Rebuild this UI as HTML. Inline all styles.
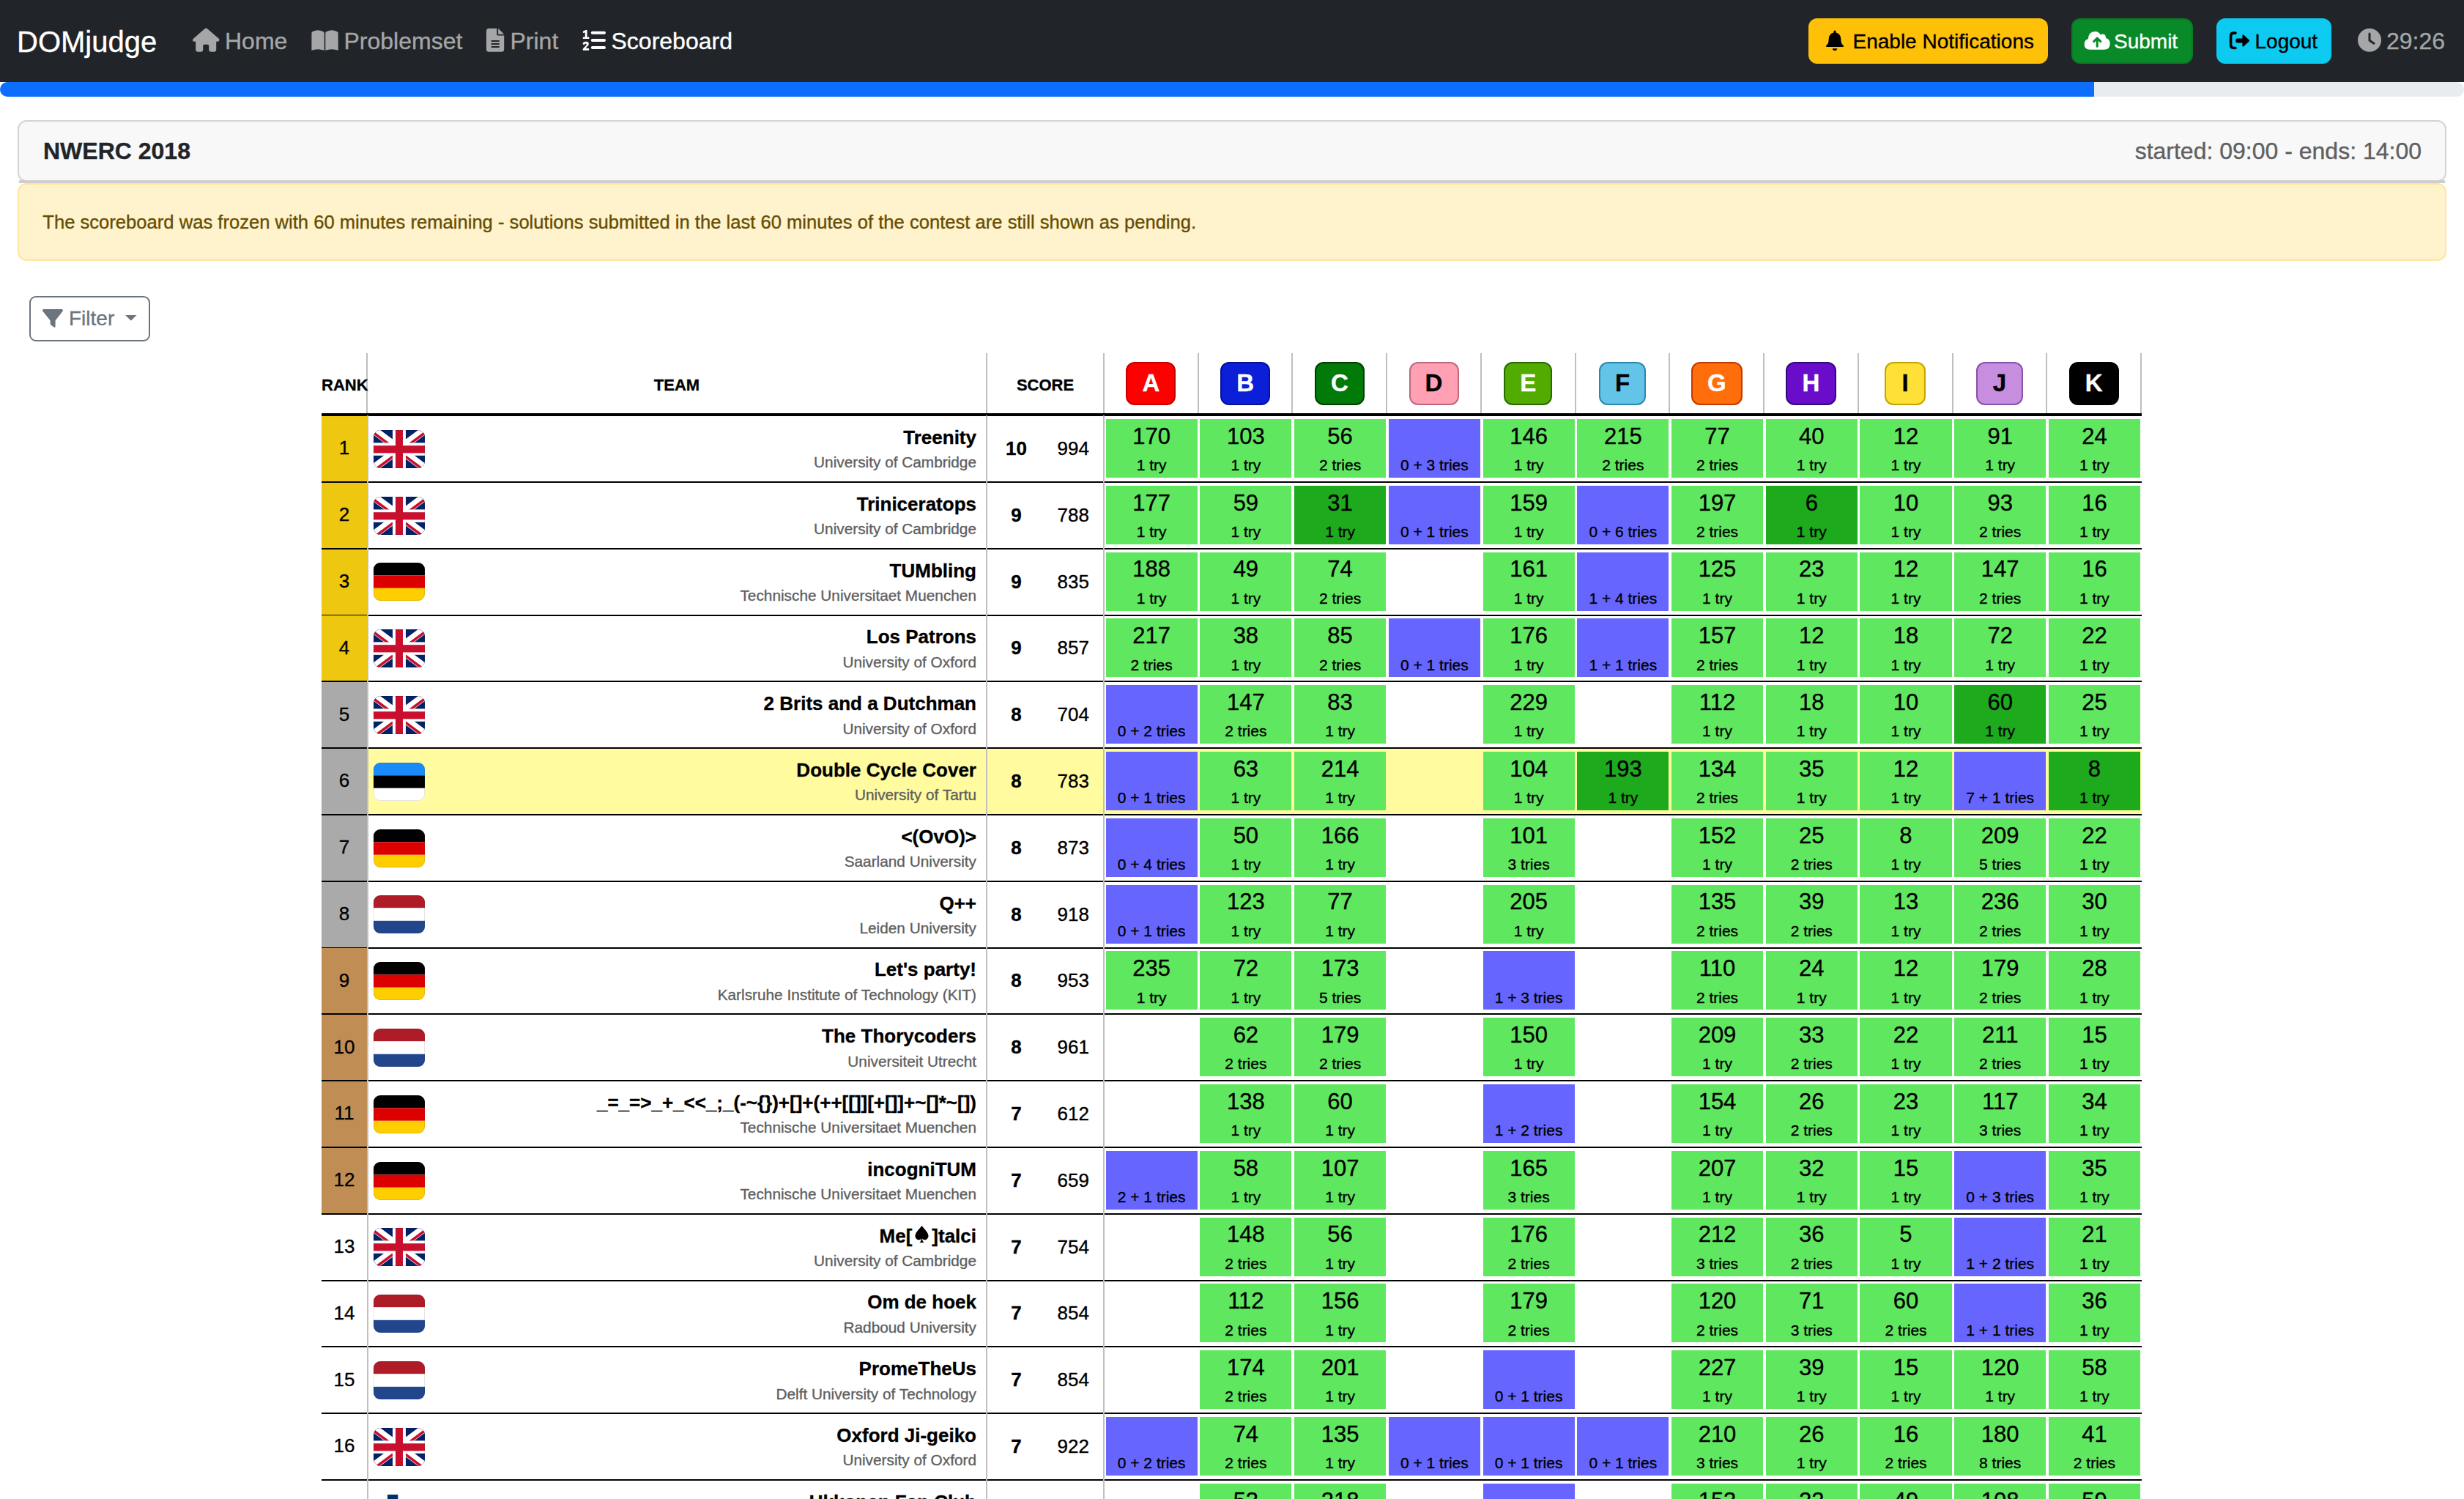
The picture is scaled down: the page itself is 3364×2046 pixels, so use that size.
<!DOCTYPE html>
<html><head><meta charset="utf-8"><title>Scoreboard</title>
<style>
html,body{margin:0;padding:0;background:#fff;}
body{width:3364px;height:2046px;position:relative;overflow:hidden;font-family:"Liberation Sans",sans-serif;}
.t{position:absolute;white-space:nowrap;-webkit-text-stroke:0.35px currentColor;}
.b{position:absolute;box-sizing:border-box;}
</style></head><body>

<div class="b" style="left:0.00px;top:0.00px;width:3364.00px;height:112.00px;background:#212529"></div>
<div class="t" style="left:23.00px;top:36.64px;font-size:40px;line-height:40px;color:#fff;font-weight:400;">DOMjudge</div>
<svg class="b" style="left:262.00px;top:37.00px;" width="40" height="36" viewBox="262 37 40 36"><path fill="#a5a6a8" d="M281.3 38.5 Q282 38.3 282.8 39 L298.6 52.6 Q300.4 54.4 299 56 Q298.4 56.8 296.6 56.8 L295.2 56.8 L295.2 67.6 Q295.2 70.8 292 70.8 L288.4 70.8 Q285.2 70.8 285.2 67.6 L285.2 62.6 Q285.2 60.8 283.4 60.8 L279 60.8 Q277.2 60.8 277.2 62.6 L277.2 67.6 Q277.2 70.8 274 70.8 L270.4 70.8 Q267.2 70.8 267.2 67.6 L267.2 56.8 L265.6 56.8 Q263.8 56.8 263.3 56 Q262.4 54.4 264 52.8 L279.8 39 Q280.6 38.3 281.3 38.5 Z"/></svg>
<div class="t" style="left:307.00px;top:40.21px;font-size:32px;line-height:32px;color:#a5a6a8;font-weight:400;">Home</div>
<svg class="b" style="left:424.00px;top:38.00px;" width="40" height="33" viewBox="424 38 40 33"><path fill="#a5a6a8" d="M425.4 45 Q425.4 43.4 427 43.1 Q434 39.4 441 43.1 Q442.7 43.4 442.7 45 L442.7 68.8 Q434 65.8 425.4 68.8 Z M444.3 45 Q444.3 43.4 446 43.1 Q453 39.4 460 43.1 Q461.7 43.4 461.7 45 L461.7 68.8 Q453 65.8 444.3 68.8 Z"/></svg>
<div class="t" style="left:469.50px;top:40.21px;font-size:32px;line-height:32px;color:#a5a6a8;font-weight:400;">Problemset</div>
<svg class="b" style="left:663.00px;top:38.00px;" width="27" height="34" viewBox="663 38 27 34"><path fill="#a5a6a8" fill-rule="evenodd" d="M667.6 38.8 L678.3 38.8 L678.3 47 Q678.3 48.6 679.9 48.6 L688.2 48.6 L688.2 67.2 Q688.2 70.8 684.6 70.8 L667.6 70.8 Q664 70.8 664 67.2 L664 42.4 Q664 38.8 667.6 38.8 Z M670.7 55.1 L681.8 55.1 L681.8 56.9 L670.7 56.9 Z M670.7 59.1 L681.8 59.1 L681.8 60.9 L670.7 60.9 Z M670.7 63.1 L681.8 63.1 L681.8 64.9 L670.7 64.9 Z"/><path fill="#a5a6a8" d="M680.2 38.8 L688.2 46.8 L680.2 46.8 Z"/></svg>
<div class="t" style="left:696.50px;top:40.21px;font-size:32px;line-height:32px;color:#a5a6a8;font-weight:400;">Print</div>
<svg class="b" style="left:794.00px;top:40.00px;" width="36" height="31" viewBox="794 40 36 31"><g fill="#fff"><path d="M796.2 42.6 L799.6 41 L801.6 41 L801.6 50.6 L803.8 50.6 Q804.4 50.6 804.4 51.6 L804.4 52.2 Q804.4 53.1 803.6 53.1 L796.6 53.1 Q795.8 53.1 795.8 52.2 L795.8 51.6 Q795.8 50.6 796.6 50.6 L798.8 50.6 L798.8 44.2 L797.2 44.9 Q796 45.2 795.8 44.2 Q795.6 43.1 796.2 42.6 Z"/><path d="M795.6 59.6 Q796.4 56.8 800 56.8 Q803.8 56.8 803.8 60 Q803.8 62 801.6 63.6 L799.6 65.9 L803.4 65.9 Q804.3 65.9 804.3 66.8 L804.3 67.6 Q804.3 68.8 803.4 68.8 L796.4 68.8 Q795.4 68.8 795.6 67.6 Q795.8 66.4 797.2 65 L800 62.2 Q801 61.2 800.8 60.2 Q800.4 59.4 799.6 59.4 Q798.6 59.4 798.2 60.4 Q797.6 61.2 796.4 60.8 Q795.4 60.4 795.6 59.6 Z"/><rect x="806.8" y="42.8" width="20.2" height="4" rx="2"/><rect x="806.8" y="53" width="20.2" height="4" rx="2"/><rect x="806.8" y="63" width="20.2" height="4" rx="2"/></g></svg>
<div class="t" style="left:834.50px;top:40.21px;font-size:32px;line-height:32px;color:#fff;font-weight:400;">Scoreboard</div>
<div class="b" style="left:2469.00px;top:25.00px;width:327.00px;height:62.00px;background:#ffc107;border:2px solid #ffc107;border-radius:12px"></div>
<svg class="b" style="left:2490.00px;top:40.00px;" width="30" height="31" viewBox="2490 40 30 31"><path fill="#000" d="M2505 41.6 Q2506.6 41.6 2506.6 43.4 L2506.6 44.6 Q2512.6 46 2513.2 52.6 L2513.6 57 Q2514 59.6 2516.6 62 Q2517.6 63 2517 63.6 Q2516.6 63.9 2515.8 63.9 L2494.2 63.9 Q2493.4 63.9 2493 63.6 Q2492.4 63 2493.4 62 Q2496 59.6 2496.4 57 L2496.8 52.6 Q2497.4 46 2503.4 44.6 L2503.4 43.4 Q2503.4 41.6 2505 41.6 Z M2501.7 66.2 L2508.3 66.2 Q2508 69 2505 69 Q2502 69 2501.7 66.2 Z"/></svg>
<div class="t" style="left:2529.50px;top:42.80px;font-size:28px;line-height:28px;color:#000;font-weight:400;">Enable Notifications</div>
<div class="b" style="left:2828.00px;top:25.00px;width:166.00px;height:62.00px;background:#088a28;border:2px solid #0a7a25;border-radius:12px"></div>
<svg class="b" style="left:2844.00px;top:42.00px;" width="38" height="27" viewBox="2844 42 38 27"><path fill="#fff" d="M2853.5 67.8 Q2845.7 67.8 2845.7 60.5 Q2845.7 54.4 2851 53 Q2851.4 43 2860.2 43 Q2865.8 43 2867.6 47.6 Q2869 46.6 2870.5 46.6 Q2875 46.6 2875 51.8 Q2880.7 53.6 2880.7 59.6 Q2880.7 67.8 2872.5 67.8 Z"/><path fill="none" stroke="#088a28" stroke-width="3" stroke-linecap="round" stroke-linejoin="round" d="M2863.2 63.2 L2863.2 52.4 M2858.6 56.6 L2863.2 52 L2867.8 56.6"/></svg>
<div class="t" style="left:2886.00px;top:42.80px;font-size:28px;line-height:28px;color:#fff;font-weight:400;">Submit</div>
<div class="b" style="left:3026.00px;top:25.00px;width:157.00px;height:62.00px;background:#0dcaf0;border:2px solid #0dcaf0;border-radius:12px"></div>
<svg class="b" style="left:3042.00px;top:42.00px;" width="32" height="27" viewBox="3042 42 32 27"><path fill="none" stroke="#000" stroke-width="3.6" stroke-linecap="round" d="M3052 45.1 L3049.5 45.1 Q3045.6 45.1 3045.6 49 L3045.6 61.6 Q3045.6 65.5 3049.5 65.5 L3052 65.5"/><path fill="#000" d="M3054.4 52.4 L3061.4 52.4 L3061.4 48.4 Q3061.6 46.6 3063 47.6 L3070.6 54.4 Q3071.6 55.5 3070.6 56.5 L3063 63.4 Q3061.6 64.4 3061.4 62.6 L3061.4 58.6 L3054.4 58.6 Q3052.3 58.6 3052.3 56.6 L3052.3 54.4 Q3052.3 52.4 3054.4 52.4 Z"/></svg>
<div class="t" style="left:3078.50px;top:42.80px;font-size:28px;line-height:28px;color:#000;font-weight:400;">Logout</div>
<svg class="b" style="left:3218.00px;top:38.00px;" width="34" height="34" viewBox="3218 38 34 34"><circle cx="3235" cy="54.8" r="16" fill="#a5a6a8"/><path fill="none" stroke="#212529" stroke-width="3" stroke-linecap="round" stroke-linejoin="round" d="M3235 46 L3235 55.2 L3241 59.2"/></svg>
<div class="t" style="left:3258.00px;top:40.21px;font-size:32px;line-height:32px;color:#a5a6a8;font-weight:400;">29:26</div>
<div class="b" style="left:0.00px;top:112.00px;width:3364.00px;height:20.00px;background:#e9ecef;border-radius:10px;overflow:hidden"></div>
<div class="b" style="left:0;top:112px;width:2859px;height:20px;background:#0d6efd;border-radius:10px 0 0 10px"></div>
<div class="b" style="left:24.00px;top:164.00px;width:3316.00px;height:84.00px;background:#f8f8f8;border:2px solid #d4d4d4;border-radius:12px"></div>
<div class="b" style="left:26.00px;top:246.00px;width:3312.00px;height:4.00px;background:#cecece"></div>
<div class="t" style="left:59.00px;top:189.91px;font-size:32px;line-height:32px;color:#212529;font-weight:700;">NWERC 2018</div>
<div class="t" style="right:58.00px;top:189.91px;font-size:32px;line-height:32px;color:#606060;font-weight:400;text-align:right;">started: 09:00 - ends: 14:00</div>
<div class="b" style="left:24.00px;top:250.00px;width:3316.00px;height:106.00px;background:#fff3cd;border:2px solid #ffe69c;border-radius:12px"></div>
<div class="t" style="left:58.30px;top:290.83px;font-size:25.6px;line-height:25.6px;color:#664d03;font-weight:400;">The scoreboard was frozen with 60 minutes remaining - solutions submitted in the last 60 minutes of the contest are still shown as pending.</div>
<div class="b" style="left:40.00px;top:404.00px;width:165.00px;height:61.50px;border:2px solid #6c757d;border-radius:9px;background:#fff"></div>
<svg class="b" style="left:56.00px;top:420.00px;" width="32" height="30" viewBox="56 420 32 30"><path fill="#6c757d" d="M59.6 422 L84.4 422 Q86.6 422.4 85.6 424.8 L75.6 437.6 L75.6 445.6 Q75.6 447.8 73.6 446.6 L69.4 443.4 Q68.6 442.6 68.6 441.4 L68.6 437.6 L58.4 424.8 Q57.4 422.4 59.6 422 Z"/></svg>
<div class="t" style="left:94.00px;top:421.30px;font-size:28px;line-height:28px;color:#6c757d;font-weight:400;">Filter</div>
<svg class="b" style="left:168.00px;top:428.00px;" width="22" height="12" viewBox="168 428 22 12"><path fill="#6c757d" d="M171 430 L186.6 430 L178.8 437.8 Z"/></svg>
<div class="b" style="left:500.00px;top:482.00px;width:2.00px;height:82.00px;background:#bfbfbf"></div>
<div class="b" style="left:1346.00px;top:482.00px;width:2.00px;height:82.00px;background:#bfbfbf"></div>
<div class="b" style="left:1506.00px;top:482.00px;width:2.00px;height:82.00px;background:#bfbfbf"></div>
<div class="b" style="left:1635.00px;top:482.00px;width:2.00px;height:82.00px;background:#bfbfbf"></div>
<div class="b" style="left:1763.00px;top:482.00px;width:2.00px;height:82.00px;background:#bfbfbf"></div>
<div class="b" style="left:1892.00px;top:482.00px;width:2.00px;height:82.00px;background:#bfbfbf"></div>
<div class="b" style="left:2021.00px;top:482.00px;width:2.00px;height:82.00px;background:#bfbfbf"></div>
<div class="b" style="left:2150.00px;top:482.00px;width:2.00px;height:82.00px;background:#bfbfbf"></div>
<div class="b" style="left:2278.00px;top:482.00px;width:2.00px;height:82.00px;background:#bfbfbf"></div>
<div class="b" style="left:2407.00px;top:482.00px;width:2.00px;height:82.00px;background:#bfbfbf"></div>
<div class="b" style="left:2536.00px;top:482.00px;width:2.00px;height:82.00px;background:#bfbfbf"></div>
<div class="b" style="left:2665.00px;top:482.00px;width:2.00px;height:82.00px;background:#bfbfbf"></div>
<div class="b" style="left:2793.00px;top:482.00px;width:2.00px;height:82.00px;background:#bfbfbf"></div>
<div class="b" style="left:2922.00px;top:482.00px;width:2.00px;height:82.00px;background:#bfbfbf"></div>
<div class="b" style="left:439.00px;top:564.00px;width:2485.00px;height:4.00px;background:#000"></div>
<div class="t" style="left:439.00px;top:515.38px;font-size:22px;line-height:22px;color:#000;font-weight:700;">RANK</div>
<div class="t" style="left:324.00px;width:1200px;top:515.38px;font-size:22px;line-height:22px;color:#000;font-weight:700;text-align:center;">TEAM</div>
<div class="t" style="left:827.00px;width:1200px;top:515.38px;font-size:22px;line-height:22px;color:#000;font-weight:700;text-align:center;">SCORE</div>
<div class="b" style="left:1537.36px;top:494.00px;width:68.00px;height:58.50px;background:#ff0000;border:2px solid #c40000;border-radius:12px"></div>
<div class="t" style="left:971.36px;width:1200px;top:506.07px;font-size:33px;line-height:33px;color:#fff;font-weight:700;text-align:center;">A</div>
<div class="b" style="left:1666.09px;top:494.00px;width:68.00px;height:58.50px;background:#0b1fd9;border:2px solid #05109a;border-radius:12px"></div>
<div class="t" style="left:1100.09px;width:1200px;top:506.07px;font-size:33px;line-height:33px;color:#fff;font-weight:700;text-align:center;">B</div>
<div class="b" style="left:1794.82px;top:494.00px;width:68.00px;height:58.50px;background:#007a08;border:2px solid #003d00;border-radius:12px"></div>
<div class="t" style="left:1228.82px;width:1200px;top:506.07px;font-size:33px;line-height:33px;color:#fff;font-weight:700;text-align:center;">C</div>
<div class="b" style="left:1923.54px;top:494.00px;width:68.00px;height:58.50px;background:#ffa0b4;border:2px solid #c0687a;border-radius:12px"></div>
<div class="t" style="left:1357.54px;width:1200px;top:506.07px;font-size:33px;line-height:33px;color:#000;font-weight:700;text-align:center;">D</div>
<div class="b" style="left:2053.27px;top:494.00px;width:66.00px;height:58.50px;background:#52ac00;border:2px solid #2a6a00;border-radius:12px"></div>
<div class="t" style="left:1486.27px;width:1200px;top:506.07px;font-size:33px;line-height:33px;color:#fff;font-weight:700;text-align:center;">E</div>
<div class="b" style="left:2183.00px;top:494.00px;width:64.00px;height:58.50px;background:#64c4e8;border:2px solid #2a88b0;border-radius:12px"></div>
<div class="t" style="left:1615.00px;width:1200px;top:506.07px;font-size:33px;line-height:33px;color:#000;font-weight:700;text-align:center;">F</div>
<div class="b" style="left:2308.73px;top:494.00px;width:70.00px;height:58.50px;background:#ff6e0a;border:2px solid #c03a00;border-radius:12px"></div>
<div class="t" style="left:1743.73px;width:1200px;top:506.07px;font-size:33px;line-height:33px;color:#fff;font-weight:700;text-align:center;">G</div>
<div class="b" style="left:2438.15px;top:494.00px;width:68.60px;height:58.50px;background:#6a0dca;border:2px solid #30087a;border-radius:12px"></div>
<div class="t" style="left:1872.45px;width:1200px;top:506.07px;font-size:33px;line-height:33px;color:#fff;font-weight:700;text-align:center;">H</div>
<div class="b" style="left:2573.18px;top:494.00px;width:56.00px;height:58.50px;background:#ffe036;border:2px solid #c4a400;border-radius:12px"></div>
<div class="t" style="left:2001.18px;width:1200px;top:506.07px;font-size:33px;line-height:33px;color:#000;font-weight:700;text-align:center;">I</div>
<div class="b" style="left:2697.91px;top:494.00px;width:64.00px;height:58.50px;background:#c78ddf;border:2px solid #8a50a8;border-radius:12px"></div>
<div class="t" style="left:2129.91px;width:1200px;top:506.07px;font-size:33px;line-height:33px;color:#000;font-weight:700;text-align:center;">J</div>
<div class="b" style="left:2824.63px;top:494.00px;width:68.00px;height:58.50px;background:#000000;border:2px solid #000000;border-radius:12px"></div>
<div class="t" style="left:2258.63px;width:1200px;top:506.07px;font-size:33px;line-height:33px;color:#fff;font-weight:700;text-align:center;">K</div>
<div class="b" style="left:439.00px;top:568.00px;width:62.00px;height:89.00px;background:#eec710"></div>
<div class="t" style="left:-130.00px;width:1200px;top:598.49px;font-size:26px;line-height:26px;color:#000;font-weight:400;text-align:center;">1</div>
<svg class="b" style="left:510px;top:586.70px" width="70" height="52" viewBox="0 0 70 52"><defs><clipPath id="c510_5867"><rect x="0" y="0" width="70" height="52" rx="9" ry="9"/></clipPath></defs><g clip-path="url(#c510_5867)"><rect width="70" height="52" fill="#012169"/><path d="M0 0 L70 52 M70 0 L0 52" stroke="#fff" stroke-width="11"/><path d="M-2 -1.5 L35 26 M72 53.5 L35 26" stroke="#c8102e" stroke-width="3.6" transform="translate(-1.8,2.4)"/><path d="M72 -1.5 L35 26 M-2 53.5 L35 26" stroke="#c8102e" stroke-width="3.6" transform="translate(1.8,2.4)"/><rect x="26" y="0" width="18" height="52" fill="#fff"/><rect x="0" y="17.4" width="70" height="17.4" fill="#fff"/><rect x="30" y="0" width="10" height="52" fill="#c8102e"/><rect x="0" y="21.2" width="70" height="10.2" fill="#c8102e"/></g><rect x="0.5" y="0.5" width="69" height="51" rx="8.5" ry="8.5" fill="none" stroke="rgba(0,0,0,0.1)" stroke-width="1"/></svg>
<div class="t" style="right:2031.00px;top:583.99px;font-size:26px;line-height:26px;color:#000;font-weight:700;text-align:right;">Treenity</div>
<div class="t" style="right:2031.00px;top:621.39px;font-size:20.8px;line-height:20.8px;color:#5f5f5f;font-weight:400;text-align:right;">University of Cambridge</div>
<div class="t" style="left:787.50px;width:1200px;top:598.99px;font-size:26px;line-height:26px;color:#000;font-weight:700;text-align:center;">10</div>
<div class="t" style="right:1877.00px;top:598.99px;font-size:26px;line-height:26px;color:#000;font-weight:400;text-align:right;">994</div>
<div class="b" style="left:1509.60px;top:572.00px;width:125.13px;height:80.00px;background:#60e760"></div>
<div class="t" style="left:972.16px;width:1200px;top:579.76px;font-size:31px;line-height:31px;color:#000;font-weight:400;text-align:center;">170</div>
<div class="t" style="left:972.16px;width:1200px;top:624.22px;font-size:21px;line-height:21px;color:#000;font-weight:400;text-align:center;">1 try</div>
<div class="b" style="left:1638.33px;top:572.00px;width:125.13px;height:80.00px;background:#60e760"></div>
<div class="t" style="left:1100.89px;width:1200px;top:579.76px;font-size:31px;line-height:31px;color:#000;font-weight:400;text-align:center;">103</div>
<div class="t" style="left:1100.89px;width:1200px;top:624.22px;font-size:21px;line-height:21px;color:#000;font-weight:400;text-align:center;">1 try</div>
<div class="b" style="left:1767.05px;top:572.00px;width:125.13px;height:80.00px;background:#60e760"></div>
<div class="t" style="left:1229.62px;width:1200px;top:579.76px;font-size:31px;line-height:31px;color:#000;font-weight:400;text-align:center;">56</div>
<div class="t" style="left:1229.62px;width:1200px;top:624.22px;font-size:21px;line-height:21px;color:#000;font-weight:400;text-align:center;">2 tries</div>
<div class="b" style="left:1895.78px;top:572.00px;width:125.13px;height:80.00px;background:#6666ff"></div>
<div class="t" style="left:1358.34px;width:1200px;top:624.22px;font-size:21px;line-height:21px;color:#000;font-weight:400;text-align:center;">0 + 3 tries</div>
<div class="b" style="left:2024.51px;top:572.00px;width:125.13px;height:80.00px;background:#60e760"></div>
<div class="t" style="left:1487.07px;width:1200px;top:579.76px;font-size:31px;line-height:31px;color:#000;font-weight:400;text-align:center;">146</div>
<div class="t" style="left:1487.07px;width:1200px;top:624.22px;font-size:21px;line-height:21px;color:#000;font-weight:400;text-align:center;">1 try</div>
<div class="b" style="left:2153.24px;top:572.00px;width:125.13px;height:80.00px;background:#60e760"></div>
<div class="t" style="left:1615.80px;width:1200px;top:579.76px;font-size:31px;line-height:31px;color:#000;font-weight:400;text-align:center;">215</div>
<div class="t" style="left:1615.80px;width:1200px;top:624.22px;font-size:21px;line-height:21px;color:#000;font-weight:400;text-align:center;">2 tries</div>
<div class="b" style="left:2281.96px;top:572.00px;width:125.13px;height:80.00px;background:#60e760"></div>
<div class="t" style="left:1744.53px;width:1200px;top:579.76px;font-size:31px;line-height:31px;color:#000;font-weight:400;text-align:center;">77</div>
<div class="t" style="left:1744.53px;width:1200px;top:624.22px;font-size:21px;line-height:21px;color:#000;font-weight:400;text-align:center;">2 tries</div>
<div class="b" style="left:2410.69px;top:572.00px;width:125.13px;height:80.00px;background:#60e760"></div>
<div class="t" style="left:1873.25px;width:1200px;top:579.76px;font-size:31px;line-height:31px;color:#000;font-weight:400;text-align:center;">40</div>
<div class="t" style="left:1873.25px;width:1200px;top:624.22px;font-size:21px;line-height:21px;color:#000;font-weight:400;text-align:center;">1 try</div>
<div class="b" style="left:2539.42px;top:572.00px;width:125.13px;height:80.00px;background:#60e760"></div>
<div class="t" style="left:2001.98px;width:1200px;top:579.76px;font-size:31px;line-height:31px;color:#000;font-weight:400;text-align:center;">12</div>
<div class="t" style="left:2001.98px;width:1200px;top:624.22px;font-size:21px;line-height:21px;color:#000;font-weight:400;text-align:center;">1 try</div>
<div class="b" style="left:2668.14px;top:572.00px;width:125.13px;height:80.00px;background:#60e760"></div>
<div class="t" style="left:2130.71px;width:1200px;top:579.76px;font-size:31px;line-height:31px;color:#000;font-weight:400;text-align:center;">91</div>
<div class="t" style="left:2130.71px;width:1200px;top:624.22px;font-size:21px;line-height:21px;color:#000;font-weight:400;text-align:center;">1 try</div>
<div class="b" style="left:2796.87px;top:572.00px;width:125.13px;height:80.00px;background:#60e760"></div>
<div class="t" style="left:2259.43px;width:1200px;top:579.76px;font-size:31px;line-height:31px;color:#000;font-weight:400;text-align:center;">24</div>
<div class="t" style="left:2259.43px;width:1200px;top:624.22px;font-size:21px;line-height:21px;color:#000;font-weight:400;text-align:center;">1 try</div>
<div class="b" style="left:439.00px;top:657.00px;width:2485.00px;height:2.00px;background:#000"></div>
<div class="b" style="left:501.00px;top:567.00px;width:2.00px;height:91.80px;background:#bfbfbf"></div>
<div class="b" style="left:1346.00px;top:567.00px;width:2.00px;height:91.80px;background:#bfbfbf"></div>
<div class="b" style="left:1506.00px;top:567.00px;width:2.00px;height:91.80px;background:#bfbfbf"></div>
<div class="b" style="left:439.00px;top:658.80px;width:62.00px;height:89.00px;background:#eec710"></div>
<div class="t" style="left:-130.00px;width:1200px;top:689.29px;font-size:26px;line-height:26px;color:#000;font-weight:400;text-align:center;">2</div>
<svg class="b" style="left:510px;top:677.50px" width="70" height="52" viewBox="0 0 70 52"><defs><clipPath id="c510_6775"><rect x="0" y="0" width="70" height="52" rx="9" ry="9"/></clipPath></defs><g clip-path="url(#c510_6775)"><rect width="70" height="52" fill="#012169"/><path d="M0 0 L70 52 M70 0 L0 52" stroke="#fff" stroke-width="11"/><path d="M-2 -1.5 L35 26 M72 53.5 L35 26" stroke="#c8102e" stroke-width="3.6" transform="translate(-1.8,2.4)"/><path d="M72 -1.5 L35 26 M-2 53.5 L35 26" stroke="#c8102e" stroke-width="3.6" transform="translate(1.8,2.4)"/><rect x="26" y="0" width="18" height="52" fill="#fff"/><rect x="0" y="17.4" width="70" height="17.4" fill="#fff"/><rect x="30" y="0" width="10" height="52" fill="#c8102e"/><rect x="0" y="21.2" width="70" height="10.2" fill="#c8102e"/></g><rect x="0.5" y="0.5" width="69" height="51" rx="8.5" ry="8.5" fill="none" stroke="rgba(0,0,0,0.1)" stroke-width="1"/></svg>
<div class="t" style="right:2031.00px;top:674.79px;font-size:26px;line-height:26px;color:#000;font-weight:700;text-align:right;">Triniceratops</div>
<div class="t" style="right:2031.00px;top:712.19px;font-size:20.8px;line-height:20.8px;color:#5f5f5f;font-weight:400;text-align:right;">University of Cambridge</div>
<div class="t" style="left:787.50px;width:1200px;top:689.79px;font-size:26px;line-height:26px;color:#000;font-weight:700;text-align:center;">9</div>
<div class="t" style="right:1877.00px;top:689.79px;font-size:26px;line-height:26px;color:#000;font-weight:400;text-align:right;">788</div>
<div class="b" style="left:1509.60px;top:662.80px;width:125.13px;height:80.00px;background:#60e760"></div>
<div class="t" style="left:972.16px;width:1200px;top:670.56px;font-size:31px;line-height:31px;color:#000;font-weight:400;text-align:center;">177</div>
<div class="t" style="left:972.16px;width:1200px;top:715.02px;font-size:21px;line-height:21px;color:#000;font-weight:400;text-align:center;">1 try</div>
<div class="b" style="left:1638.33px;top:662.80px;width:125.13px;height:80.00px;background:#60e760"></div>
<div class="t" style="left:1100.89px;width:1200px;top:670.56px;font-size:31px;line-height:31px;color:#000;font-weight:400;text-align:center;">59</div>
<div class="t" style="left:1100.89px;width:1200px;top:715.02px;font-size:21px;line-height:21px;color:#000;font-weight:400;text-align:center;">1 try</div>
<div class="b" style="left:1767.05px;top:662.80px;width:125.13px;height:80.00px;background:#1daa1d"></div>
<div class="t" style="left:1229.62px;width:1200px;top:670.56px;font-size:31px;line-height:31px;color:#000;font-weight:400;text-align:center;">31</div>
<div class="t" style="left:1229.62px;width:1200px;top:715.02px;font-size:21px;line-height:21px;color:#000;font-weight:400;text-align:center;">1 try</div>
<div class="b" style="left:1895.78px;top:662.80px;width:125.13px;height:80.00px;background:#6666ff"></div>
<div class="t" style="left:1358.34px;width:1200px;top:715.02px;font-size:21px;line-height:21px;color:#000;font-weight:400;text-align:center;">0 + 1 tries</div>
<div class="b" style="left:2024.51px;top:662.80px;width:125.13px;height:80.00px;background:#60e760"></div>
<div class="t" style="left:1487.07px;width:1200px;top:670.56px;font-size:31px;line-height:31px;color:#000;font-weight:400;text-align:center;">159</div>
<div class="t" style="left:1487.07px;width:1200px;top:715.02px;font-size:21px;line-height:21px;color:#000;font-weight:400;text-align:center;">1 try</div>
<div class="b" style="left:2153.24px;top:662.80px;width:125.13px;height:80.00px;background:#6666ff"></div>
<div class="t" style="left:1615.80px;width:1200px;top:715.02px;font-size:21px;line-height:21px;color:#000;font-weight:400;text-align:center;">0 + 6 tries</div>
<div class="b" style="left:2281.96px;top:662.80px;width:125.13px;height:80.00px;background:#60e760"></div>
<div class="t" style="left:1744.53px;width:1200px;top:670.56px;font-size:31px;line-height:31px;color:#000;font-weight:400;text-align:center;">197</div>
<div class="t" style="left:1744.53px;width:1200px;top:715.02px;font-size:21px;line-height:21px;color:#000;font-weight:400;text-align:center;">2 tries</div>
<div class="b" style="left:2410.69px;top:662.80px;width:125.13px;height:80.00px;background:#1daa1d"></div>
<div class="t" style="left:1873.25px;width:1200px;top:670.56px;font-size:31px;line-height:31px;color:#000;font-weight:400;text-align:center;">6</div>
<div class="t" style="left:1873.25px;width:1200px;top:715.02px;font-size:21px;line-height:21px;color:#000;font-weight:400;text-align:center;">1 try</div>
<div class="b" style="left:2539.42px;top:662.80px;width:125.13px;height:80.00px;background:#60e760"></div>
<div class="t" style="left:2001.98px;width:1200px;top:670.56px;font-size:31px;line-height:31px;color:#000;font-weight:400;text-align:center;">10</div>
<div class="t" style="left:2001.98px;width:1200px;top:715.02px;font-size:21px;line-height:21px;color:#000;font-weight:400;text-align:center;">1 try</div>
<div class="b" style="left:2668.14px;top:662.80px;width:125.13px;height:80.00px;background:#60e760"></div>
<div class="t" style="left:2130.71px;width:1200px;top:670.56px;font-size:31px;line-height:31px;color:#000;font-weight:400;text-align:center;">93</div>
<div class="t" style="left:2130.71px;width:1200px;top:715.02px;font-size:21px;line-height:21px;color:#000;font-weight:400;text-align:center;">2 tries</div>
<div class="b" style="left:2796.87px;top:662.80px;width:125.13px;height:80.00px;background:#60e760"></div>
<div class="t" style="left:2259.43px;width:1200px;top:670.56px;font-size:31px;line-height:31px;color:#000;font-weight:400;text-align:center;">16</div>
<div class="t" style="left:2259.43px;width:1200px;top:715.02px;font-size:21px;line-height:21px;color:#000;font-weight:400;text-align:center;">1 try</div>
<div class="b" style="left:439.00px;top:747.80px;width:2485.00px;height:2.00px;background:#000"></div>
<div class="b" style="left:501.00px;top:657.80px;width:2.00px;height:91.80px;background:#bfbfbf"></div>
<div class="b" style="left:1346.00px;top:657.80px;width:2.00px;height:91.80px;background:#bfbfbf"></div>
<div class="b" style="left:1506.00px;top:657.80px;width:2.00px;height:91.80px;background:#bfbfbf"></div>
<div class="b" style="left:439.00px;top:749.60px;width:62.00px;height:89.00px;background:#eec710"></div>
<div class="t" style="left:-130.00px;width:1200px;top:780.09px;font-size:26px;line-height:26px;color:#000;font-weight:400;text-align:center;">3</div>
<svg class="b" style="left:510px;top:768.30px" width="70" height="52" viewBox="0 0 70 52"><defs><clipPath id="c510_7683"><rect x="0" y="0" width="70" height="52" rx="9" ry="9"/></clipPath></defs><g clip-path="url(#c510_7683)"><rect width="70" height="17.4" fill="#000"/><rect y="17.4" width="70" height="17.4" fill="#dd0000"/><rect y="34.8" width="70" height="17.2" fill="#ffce00"/></g><rect x="0.5" y="0.5" width="69" height="51" rx="8.5" ry="8.5" fill="none" stroke="rgba(0,0,0,0.1)" stroke-width="1"/></svg>
<div class="t" style="right:2031.00px;top:765.59px;font-size:26px;line-height:26px;color:#000;font-weight:700;text-align:right;">TUMbling</div>
<div class="t" style="right:2031.00px;top:802.99px;font-size:20.8px;line-height:20.8px;color:#5f5f5f;font-weight:400;text-align:right;">Technische Universitaet Muenchen</div>
<div class="t" style="left:787.50px;width:1200px;top:780.59px;font-size:26px;line-height:26px;color:#000;font-weight:700;text-align:center;">9</div>
<div class="t" style="right:1877.00px;top:780.59px;font-size:26px;line-height:26px;color:#000;font-weight:400;text-align:right;">835</div>
<div class="b" style="left:1509.60px;top:753.60px;width:125.13px;height:80.00px;background:#60e760"></div>
<div class="t" style="left:972.16px;width:1200px;top:761.36px;font-size:31px;line-height:31px;color:#000;font-weight:400;text-align:center;">188</div>
<div class="t" style="left:972.16px;width:1200px;top:805.82px;font-size:21px;line-height:21px;color:#000;font-weight:400;text-align:center;">1 try</div>
<div class="b" style="left:1638.33px;top:753.60px;width:125.13px;height:80.00px;background:#60e760"></div>
<div class="t" style="left:1100.89px;width:1200px;top:761.36px;font-size:31px;line-height:31px;color:#000;font-weight:400;text-align:center;">49</div>
<div class="t" style="left:1100.89px;width:1200px;top:805.82px;font-size:21px;line-height:21px;color:#000;font-weight:400;text-align:center;">1 try</div>
<div class="b" style="left:1767.05px;top:753.60px;width:125.13px;height:80.00px;background:#60e760"></div>
<div class="t" style="left:1229.62px;width:1200px;top:761.36px;font-size:31px;line-height:31px;color:#000;font-weight:400;text-align:center;">74</div>
<div class="t" style="left:1229.62px;width:1200px;top:805.82px;font-size:21px;line-height:21px;color:#000;font-weight:400;text-align:center;">2 tries</div>
<div class="b" style="left:2024.51px;top:753.60px;width:125.13px;height:80.00px;background:#60e760"></div>
<div class="t" style="left:1487.07px;width:1200px;top:761.36px;font-size:31px;line-height:31px;color:#000;font-weight:400;text-align:center;">161</div>
<div class="t" style="left:1487.07px;width:1200px;top:805.82px;font-size:21px;line-height:21px;color:#000;font-weight:400;text-align:center;">1 try</div>
<div class="b" style="left:2153.24px;top:753.60px;width:125.13px;height:80.00px;background:#6666ff"></div>
<div class="t" style="left:1615.80px;width:1200px;top:805.82px;font-size:21px;line-height:21px;color:#000;font-weight:400;text-align:center;">1 + 4 tries</div>
<div class="b" style="left:2281.96px;top:753.60px;width:125.13px;height:80.00px;background:#60e760"></div>
<div class="t" style="left:1744.53px;width:1200px;top:761.36px;font-size:31px;line-height:31px;color:#000;font-weight:400;text-align:center;">125</div>
<div class="t" style="left:1744.53px;width:1200px;top:805.82px;font-size:21px;line-height:21px;color:#000;font-weight:400;text-align:center;">1 try</div>
<div class="b" style="left:2410.69px;top:753.60px;width:125.13px;height:80.00px;background:#60e760"></div>
<div class="t" style="left:1873.25px;width:1200px;top:761.36px;font-size:31px;line-height:31px;color:#000;font-weight:400;text-align:center;">23</div>
<div class="t" style="left:1873.25px;width:1200px;top:805.82px;font-size:21px;line-height:21px;color:#000;font-weight:400;text-align:center;">1 try</div>
<div class="b" style="left:2539.42px;top:753.60px;width:125.13px;height:80.00px;background:#60e760"></div>
<div class="t" style="left:2001.98px;width:1200px;top:761.36px;font-size:31px;line-height:31px;color:#000;font-weight:400;text-align:center;">12</div>
<div class="t" style="left:2001.98px;width:1200px;top:805.82px;font-size:21px;line-height:21px;color:#000;font-weight:400;text-align:center;">1 try</div>
<div class="b" style="left:2668.14px;top:753.60px;width:125.13px;height:80.00px;background:#60e760"></div>
<div class="t" style="left:2130.71px;width:1200px;top:761.36px;font-size:31px;line-height:31px;color:#000;font-weight:400;text-align:center;">147</div>
<div class="t" style="left:2130.71px;width:1200px;top:805.82px;font-size:21px;line-height:21px;color:#000;font-weight:400;text-align:center;">2 tries</div>
<div class="b" style="left:2796.87px;top:753.60px;width:125.13px;height:80.00px;background:#60e760"></div>
<div class="t" style="left:2259.43px;width:1200px;top:761.36px;font-size:31px;line-height:31px;color:#000;font-weight:400;text-align:center;">16</div>
<div class="t" style="left:2259.43px;width:1200px;top:805.82px;font-size:21px;line-height:21px;color:#000;font-weight:400;text-align:center;">1 try</div>
<div class="b" style="left:439.00px;top:838.60px;width:2485.00px;height:2.00px;background:#000"></div>
<div class="b" style="left:501.00px;top:748.60px;width:2.00px;height:91.80px;background:#bfbfbf"></div>
<div class="b" style="left:1346.00px;top:748.60px;width:2.00px;height:91.80px;background:#bfbfbf"></div>
<div class="b" style="left:1506.00px;top:748.60px;width:2.00px;height:91.80px;background:#bfbfbf"></div>
<div class="b" style="left:439.00px;top:840.40px;width:62.00px;height:89.00px;background:#eec710"></div>
<div class="t" style="left:-130.00px;width:1200px;top:870.89px;font-size:26px;line-height:26px;color:#000;font-weight:400;text-align:center;">4</div>
<svg class="b" style="left:510px;top:859.10px" width="70" height="52" viewBox="0 0 70 52"><defs><clipPath id="c510_8591"><rect x="0" y="0" width="70" height="52" rx="9" ry="9"/></clipPath></defs><g clip-path="url(#c510_8591)"><rect width="70" height="52" fill="#012169"/><path d="M0 0 L70 52 M70 0 L0 52" stroke="#fff" stroke-width="11"/><path d="M-2 -1.5 L35 26 M72 53.5 L35 26" stroke="#c8102e" stroke-width="3.6" transform="translate(-1.8,2.4)"/><path d="M72 -1.5 L35 26 M-2 53.5 L35 26" stroke="#c8102e" stroke-width="3.6" transform="translate(1.8,2.4)"/><rect x="26" y="0" width="18" height="52" fill="#fff"/><rect x="0" y="17.4" width="70" height="17.4" fill="#fff"/><rect x="30" y="0" width="10" height="52" fill="#c8102e"/><rect x="0" y="21.2" width="70" height="10.2" fill="#c8102e"/></g><rect x="0.5" y="0.5" width="69" height="51" rx="8.5" ry="8.5" fill="none" stroke="rgba(0,0,0,0.1)" stroke-width="1"/></svg>
<div class="t" style="right:2031.00px;top:856.39px;font-size:26px;line-height:26px;color:#000;font-weight:700;text-align:right;">Los Patrons</div>
<div class="t" style="right:2031.00px;top:893.79px;font-size:20.8px;line-height:20.8px;color:#5f5f5f;font-weight:400;text-align:right;">University of Oxford</div>
<div class="t" style="left:787.50px;width:1200px;top:871.39px;font-size:26px;line-height:26px;color:#000;font-weight:700;text-align:center;">9</div>
<div class="t" style="right:1877.00px;top:871.39px;font-size:26px;line-height:26px;color:#000;font-weight:400;text-align:right;">857</div>
<div class="b" style="left:1509.60px;top:844.40px;width:125.13px;height:80.00px;background:#60e760"></div>
<div class="t" style="left:972.16px;width:1200px;top:852.16px;font-size:31px;line-height:31px;color:#000;font-weight:400;text-align:center;">217</div>
<div class="t" style="left:972.16px;width:1200px;top:896.62px;font-size:21px;line-height:21px;color:#000;font-weight:400;text-align:center;">2 tries</div>
<div class="b" style="left:1638.33px;top:844.40px;width:125.13px;height:80.00px;background:#60e760"></div>
<div class="t" style="left:1100.89px;width:1200px;top:852.16px;font-size:31px;line-height:31px;color:#000;font-weight:400;text-align:center;">38</div>
<div class="t" style="left:1100.89px;width:1200px;top:896.62px;font-size:21px;line-height:21px;color:#000;font-weight:400;text-align:center;">1 try</div>
<div class="b" style="left:1767.05px;top:844.40px;width:125.13px;height:80.00px;background:#60e760"></div>
<div class="t" style="left:1229.62px;width:1200px;top:852.16px;font-size:31px;line-height:31px;color:#000;font-weight:400;text-align:center;">85</div>
<div class="t" style="left:1229.62px;width:1200px;top:896.62px;font-size:21px;line-height:21px;color:#000;font-weight:400;text-align:center;">2 tries</div>
<div class="b" style="left:1895.78px;top:844.40px;width:125.13px;height:80.00px;background:#6666ff"></div>
<div class="t" style="left:1358.34px;width:1200px;top:896.62px;font-size:21px;line-height:21px;color:#000;font-weight:400;text-align:center;">0 + 1 tries</div>
<div class="b" style="left:2024.51px;top:844.40px;width:125.13px;height:80.00px;background:#60e760"></div>
<div class="t" style="left:1487.07px;width:1200px;top:852.16px;font-size:31px;line-height:31px;color:#000;font-weight:400;text-align:center;">176</div>
<div class="t" style="left:1487.07px;width:1200px;top:896.62px;font-size:21px;line-height:21px;color:#000;font-weight:400;text-align:center;">1 try</div>
<div class="b" style="left:2153.24px;top:844.40px;width:125.13px;height:80.00px;background:#6666ff"></div>
<div class="t" style="left:1615.80px;width:1200px;top:896.62px;font-size:21px;line-height:21px;color:#000;font-weight:400;text-align:center;">1 + 1 tries</div>
<div class="b" style="left:2281.96px;top:844.40px;width:125.13px;height:80.00px;background:#60e760"></div>
<div class="t" style="left:1744.53px;width:1200px;top:852.16px;font-size:31px;line-height:31px;color:#000;font-weight:400;text-align:center;">157</div>
<div class="t" style="left:1744.53px;width:1200px;top:896.62px;font-size:21px;line-height:21px;color:#000;font-weight:400;text-align:center;">2 tries</div>
<div class="b" style="left:2410.69px;top:844.40px;width:125.13px;height:80.00px;background:#60e760"></div>
<div class="t" style="left:1873.25px;width:1200px;top:852.16px;font-size:31px;line-height:31px;color:#000;font-weight:400;text-align:center;">12</div>
<div class="t" style="left:1873.25px;width:1200px;top:896.62px;font-size:21px;line-height:21px;color:#000;font-weight:400;text-align:center;">1 try</div>
<div class="b" style="left:2539.42px;top:844.40px;width:125.13px;height:80.00px;background:#60e760"></div>
<div class="t" style="left:2001.98px;width:1200px;top:852.16px;font-size:31px;line-height:31px;color:#000;font-weight:400;text-align:center;">18</div>
<div class="t" style="left:2001.98px;width:1200px;top:896.62px;font-size:21px;line-height:21px;color:#000;font-weight:400;text-align:center;">1 try</div>
<div class="b" style="left:2668.14px;top:844.40px;width:125.13px;height:80.00px;background:#60e760"></div>
<div class="t" style="left:2130.71px;width:1200px;top:852.16px;font-size:31px;line-height:31px;color:#000;font-weight:400;text-align:center;">72</div>
<div class="t" style="left:2130.71px;width:1200px;top:896.62px;font-size:21px;line-height:21px;color:#000;font-weight:400;text-align:center;">1 try</div>
<div class="b" style="left:2796.87px;top:844.40px;width:125.13px;height:80.00px;background:#60e760"></div>
<div class="t" style="left:2259.43px;width:1200px;top:852.16px;font-size:31px;line-height:31px;color:#000;font-weight:400;text-align:center;">22</div>
<div class="t" style="left:2259.43px;width:1200px;top:896.62px;font-size:21px;line-height:21px;color:#000;font-weight:400;text-align:center;">1 try</div>
<div class="b" style="left:439.00px;top:929.40px;width:2485.00px;height:2.00px;background:#000"></div>
<div class="b" style="left:501.00px;top:839.40px;width:2.00px;height:91.80px;background:#bfbfbf"></div>
<div class="b" style="left:1346.00px;top:839.40px;width:2.00px;height:91.80px;background:#bfbfbf"></div>
<div class="b" style="left:1506.00px;top:839.40px;width:2.00px;height:91.80px;background:#bfbfbf"></div>
<div class="b" style="left:439.00px;top:931.20px;width:62.00px;height:89.00px;background:#aaaaaa"></div>
<div class="t" style="left:-130.00px;width:1200px;top:961.69px;font-size:26px;line-height:26px;color:#000;font-weight:400;text-align:center;">5</div>
<svg class="b" style="left:510px;top:949.90px" width="70" height="52" viewBox="0 0 70 52"><defs><clipPath id="c510_9499"><rect x="0" y="0" width="70" height="52" rx="9" ry="9"/></clipPath></defs><g clip-path="url(#c510_9499)"><rect width="70" height="52" fill="#012169"/><path d="M0 0 L70 52 M70 0 L0 52" stroke="#fff" stroke-width="11"/><path d="M-2 -1.5 L35 26 M72 53.5 L35 26" stroke="#c8102e" stroke-width="3.6" transform="translate(-1.8,2.4)"/><path d="M72 -1.5 L35 26 M-2 53.5 L35 26" stroke="#c8102e" stroke-width="3.6" transform="translate(1.8,2.4)"/><rect x="26" y="0" width="18" height="52" fill="#fff"/><rect x="0" y="17.4" width="70" height="17.4" fill="#fff"/><rect x="30" y="0" width="10" height="52" fill="#c8102e"/><rect x="0" y="21.2" width="70" height="10.2" fill="#c8102e"/></g><rect x="0.5" y="0.5" width="69" height="51" rx="8.5" ry="8.5" fill="none" stroke="rgba(0,0,0,0.1)" stroke-width="1"/></svg>
<div class="t" style="right:2031.00px;top:947.19px;font-size:26px;line-height:26px;color:#000;font-weight:700;text-align:right;">2 Brits and a Dutchman</div>
<div class="t" style="right:2031.00px;top:984.59px;font-size:20.8px;line-height:20.8px;color:#5f5f5f;font-weight:400;text-align:right;">University of Oxford</div>
<div class="t" style="left:787.50px;width:1200px;top:962.19px;font-size:26px;line-height:26px;color:#000;font-weight:700;text-align:center;">8</div>
<div class="t" style="right:1877.00px;top:962.19px;font-size:26px;line-height:26px;color:#000;font-weight:400;text-align:right;">704</div>
<div class="b" style="left:1509.60px;top:935.20px;width:125.13px;height:80.00px;background:#6666ff"></div>
<div class="t" style="left:972.16px;width:1200px;top:987.42px;font-size:21px;line-height:21px;color:#000;font-weight:400;text-align:center;">0 + 2 tries</div>
<div class="b" style="left:1638.33px;top:935.20px;width:125.13px;height:80.00px;background:#60e760"></div>
<div class="t" style="left:1100.89px;width:1200px;top:942.96px;font-size:31px;line-height:31px;color:#000;font-weight:400;text-align:center;">147</div>
<div class="t" style="left:1100.89px;width:1200px;top:987.42px;font-size:21px;line-height:21px;color:#000;font-weight:400;text-align:center;">2 tries</div>
<div class="b" style="left:1767.05px;top:935.20px;width:125.13px;height:80.00px;background:#60e760"></div>
<div class="t" style="left:1229.62px;width:1200px;top:942.96px;font-size:31px;line-height:31px;color:#000;font-weight:400;text-align:center;">83</div>
<div class="t" style="left:1229.62px;width:1200px;top:987.42px;font-size:21px;line-height:21px;color:#000;font-weight:400;text-align:center;">1 try</div>
<div class="b" style="left:2024.51px;top:935.20px;width:125.13px;height:80.00px;background:#60e760"></div>
<div class="t" style="left:1487.07px;width:1200px;top:942.96px;font-size:31px;line-height:31px;color:#000;font-weight:400;text-align:center;">229</div>
<div class="t" style="left:1487.07px;width:1200px;top:987.42px;font-size:21px;line-height:21px;color:#000;font-weight:400;text-align:center;">1 try</div>
<div class="b" style="left:2281.96px;top:935.20px;width:125.13px;height:80.00px;background:#60e760"></div>
<div class="t" style="left:1744.53px;width:1200px;top:942.96px;font-size:31px;line-height:31px;color:#000;font-weight:400;text-align:center;">112</div>
<div class="t" style="left:1744.53px;width:1200px;top:987.42px;font-size:21px;line-height:21px;color:#000;font-weight:400;text-align:center;">1 try</div>
<div class="b" style="left:2410.69px;top:935.20px;width:125.13px;height:80.00px;background:#60e760"></div>
<div class="t" style="left:1873.25px;width:1200px;top:942.96px;font-size:31px;line-height:31px;color:#000;font-weight:400;text-align:center;">18</div>
<div class="t" style="left:1873.25px;width:1200px;top:987.42px;font-size:21px;line-height:21px;color:#000;font-weight:400;text-align:center;">1 try</div>
<div class="b" style="left:2539.42px;top:935.20px;width:125.13px;height:80.00px;background:#60e760"></div>
<div class="t" style="left:2001.98px;width:1200px;top:942.96px;font-size:31px;line-height:31px;color:#000;font-weight:400;text-align:center;">10</div>
<div class="t" style="left:2001.98px;width:1200px;top:987.42px;font-size:21px;line-height:21px;color:#000;font-weight:400;text-align:center;">1 try</div>
<div class="b" style="left:2668.14px;top:935.20px;width:125.13px;height:80.00px;background:#1daa1d"></div>
<div class="t" style="left:2130.71px;width:1200px;top:942.96px;font-size:31px;line-height:31px;color:#000;font-weight:400;text-align:center;">60</div>
<div class="t" style="left:2130.71px;width:1200px;top:987.42px;font-size:21px;line-height:21px;color:#000;font-weight:400;text-align:center;">1 try</div>
<div class="b" style="left:2796.87px;top:935.20px;width:125.13px;height:80.00px;background:#60e760"></div>
<div class="t" style="left:2259.43px;width:1200px;top:942.96px;font-size:31px;line-height:31px;color:#000;font-weight:400;text-align:center;">25</div>
<div class="t" style="left:2259.43px;width:1200px;top:987.42px;font-size:21px;line-height:21px;color:#000;font-weight:400;text-align:center;">1 try</div>
<div class="b" style="left:439.00px;top:1020.20px;width:2485.00px;height:2.00px;background:#000"></div>
<div class="b" style="left:501.00px;top:930.20px;width:2.00px;height:91.80px;background:#bfbfbf"></div>
<div class="b" style="left:1346.00px;top:930.20px;width:2.00px;height:91.80px;background:#bfbfbf"></div>
<div class="b" style="left:1506.00px;top:930.20px;width:2.00px;height:91.80px;background:#bfbfbf"></div>
<div class="b" style="left:503.00px;top:1022.00px;width:2421.00px;height:89.00px;background:#fffb9e"></div>
<div class="b" style="left:439.00px;top:1022.00px;width:62.00px;height:89.00px;background:#aaaaaa"></div>
<div class="t" style="left:-130.00px;width:1200px;top:1052.49px;font-size:26px;line-height:26px;color:#000;font-weight:400;text-align:center;">6</div>
<svg class="b" style="left:510px;top:1040.70px" width="70" height="52" viewBox="0 0 70 52"><defs><clipPath id="c510_10407"><rect x="0" y="0" width="70" height="52" rx="9" ry="9"/></clipPath></defs><g clip-path="url(#c510_10407)"><rect width="70" height="17.4" fill="#1a8bf8"/><rect y="17.4" width="70" height="17.4" fill="#000"/><rect y="34.8" width="70" height="17.2" fill="#fff"/></g><rect x="0.5" y="0.5" width="69" height="51" rx="8.5" ry="8.5" fill="none" stroke="rgba(0,0,0,0.1)" stroke-width="1"/></svg>
<div class="t" style="right:2031.00px;top:1037.99px;font-size:26px;line-height:26px;color:#000;font-weight:700;text-align:right;">Double Cycle Cover</div>
<div class="t" style="right:2031.00px;top:1075.39px;font-size:20.8px;line-height:20.8px;color:#5f5f5f;font-weight:400;text-align:right;">University of Tartu</div>
<div class="t" style="left:787.50px;width:1200px;top:1052.99px;font-size:26px;line-height:26px;color:#000;font-weight:700;text-align:center;">8</div>
<div class="t" style="right:1877.00px;top:1052.99px;font-size:26px;line-height:26px;color:#000;font-weight:400;text-align:right;">783</div>
<div class="b" style="left:1509.60px;top:1026.00px;width:125.13px;height:80.00px;background:#6666ff"></div>
<div class="t" style="left:972.16px;width:1200px;top:1078.22px;font-size:21px;line-height:21px;color:#000;font-weight:400;text-align:center;">0 + 1 tries</div>
<div class="b" style="left:1638.33px;top:1026.00px;width:125.13px;height:80.00px;background:#60e760"></div>
<div class="t" style="left:1100.89px;width:1200px;top:1033.76px;font-size:31px;line-height:31px;color:#000;font-weight:400;text-align:center;">63</div>
<div class="t" style="left:1100.89px;width:1200px;top:1078.22px;font-size:21px;line-height:21px;color:#000;font-weight:400;text-align:center;">1 try</div>
<div class="b" style="left:1767.05px;top:1026.00px;width:125.13px;height:80.00px;background:#60e760"></div>
<div class="t" style="left:1229.62px;width:1200px;top:1033.76px;font-size:31px;line-height:31px;color:#000;font-weight:400;text-align:center;">214</div>
<div class="t" style="left:1229.62px;width:1200px;top:1078.22px;font-size:21px;line-height:21px;color:#000;font-weight:400;text-align:center;">1 try</div>
<div class="b" style="left:2024.51px;top:1026.00px;width:125.13px;height:80.00px;background:#60e760"></div>
<div class="t" style="left:1487.07px;width:1200px;top:1033.76px;font-size:31px;line-height:31px;color:#000;font-weight:400;text-align:center;">104</div>
<div class="t" style="left:1487.07px;width:1200px;top:1078.22px;font-size:21px;line-height:21px;color:#000;font-weight:400;text-align:center;">1 try</div>
<div class="b" style="left:2153.24px;top:1026.00px;width:125.13px;height:80.00px;background:#1daa1d"></div>
<div class="t" style="left:1615.80px;width:1200px;top:1033.76px;font-size:31px;line-height:31px;color:#000;font-weight:400;text-align:center;">193</div>
<div class="t" style="left:1615.80px;width:1200px;top:1078.22px;font-size:21px;line-height:21px;color:#000;font-weight:400;text-align:center;">1 try</div>
<div class="b" style="left:2281.96px;top:1026.00px;width:125.13px;height:80.00px;background:#60e760"></div>
<div class="t" style="left:1744.53px;width:1200px;top:1033.76px;font-size:31px;line-height:31px;color:#000;font-weight:400;text-align:center;">134</div>
<div class="t" style="left:1744.53px;width:1200px;top:1078.22px;font-size:21px;line-height:21px;color:#000;font-weight:400;text-align:center;">2 tries</div>
<div class="b" style="left:2410.69px;top:1026.00px;width:125.13px;height:80.00px;background:#60e760"></div>
<div class="t" style="left:1873.25px;width:1200px;top:1033.76px;font-size:31px;line-height:31px;color:#000;font-weight:400;text-align:center;">35</div>
<div class="t" style="left:1873.25px;width:1200px;top:1078.22px;font-size:21px;line-height:21px;color:#000;font-weight:400;text-align:center;">1 try</div>
<div class="b" style="left:2539.42px;top:1026.00px;width:125.13px;height:80.00px;background:#60e760"></div>
<div class="t" style="left:2001.98px;width:1200px;top:1033.76px;font-size:31px;line-height:31px;color:#000;font-weight:400;text-align:center;">12</div>
<div class="t" style="left:2001.98px;width:1200px;top:1078.22px;font-size:21px;line-height:21px;color:#000;font-weight:400;text-align:center;">1 try</div>
<div class="b" style="left:2668.14px;top:1026.00px;width:125.13px;height:80.00px;background:#6666ff"></div>
<div class="t" style="left:2130.71px;width:1200px;top:1078.22px;font-size:21px;line-height:21px;color:#000;font-weight:400;text-align:center;">7 + 1 tries</div>
<div class="b" style="left:2796.87px;top:1026.00px;width:125.13px;height:80.00px;background:#1daa1d"></div>
<div class="t" style="left:2259.43px;width:1200px;top:1033.76px;font-size:31px;line-height:31px;color:#000;font-weight:400;text-align:center;">8</div>
<div class="t" style="left:2259.43px;width:1200px;top:1078.22px;font-size:21px;line-height:21px;color:#000;font-weight:400;text-align:center;">1 try</div>
<div class="b" style="left:439.00px;top:1111.00px;width:2485.00px;height:2.00px;background:#000"></div>
<div class="b" style="left:501.00px;top:1021.00px;width:2.00px;height:91.80px;background:#bfbfbf"></div>
<div class="b" style="left:1346.00px;top:1021.00px;width:2.00px;height:91.80px;background:#bfbfbf"></div>
<div class="b" style="left:1506.00px;top:1021.00px;width:2.00px;height:91.80px;background:#bfbfbf"></div>
<div class="b" style="left:439.00px;top:1112.80px;width:62.00px;height:89.00px;background:#aaaaaa"></div>
<div class="t" style="left:-130.00px;width:1200px;top:1143.29px;font-size:26px;line-height:26px;color:#000;font-weight:400;text-align:center;">7</div>
<svg class="b" style="left:510px;top:1131.50px" width="70" height="52" viewBox="0 0 70 52"><defs><clipPath id="c510_11315"><rect x="0" y="0" width="70" height="52" rx="9" ry="9"/></clipPath></defs><g clip-path="url(#c510_11315)"><rect width="70" height="17.4" fill="#000"/><rect y="17.4" width="70" height="17.4" fill="#dd0000"/><rect y="34.8" width="70" height="17.2" fill="#ffce00"/></g><rect x="0.5" y="0.5" width="69" height="51" rx="8.5" ry="8.5" fill="none" stroke="rgba(0,0,0,0.1)" stroke-width="1"/></svg>
<div class="t" style="right:2031.00px;top:1128.79px;font-size:26px;line-height:26px;color:#000;font-weight:700;text-align:right;">&lt;(OvO)&gt;</div>
<div class="t" style="right:2031.00px;top:1166.19px;font-size:20.8px;line-height:20.8px;color:#5f5f5f;font-weight:400;text-align:right;">Saarland University</div>
<div class="t" style="left:787.50px;width:1200px;top:1143.79px;font-size:26px;line-height:26px;color:#000;font-weight:700;text-align:center;">8</div>
<div class="t" style="right:1877.00px;top:1143.79px;font-size:26px;line-height:26px;color:#000;font-weight:400;text-align:right;">873</div>
<div class="b" style="left:1509.60px;top:1116.80px;width:125.13px;height:80.00px;background:#6666ff"></div>
<div class="t" style="left:972.16px;width:1200px;top:1169.02px;font-size:21px;line-height:21px;color:#000;font-weight:400;text-align:center;">0 + 4 tries</div>
<div class="b" style="left:1638.33px;top:1116.80px;width:125.13px;height:80.00px;background:#60e760"></div>
<div class="t" style="left:1100.89px;width:1200px;top:1124.56px;font-size:31px;line-height:31px;color:#000;font-weight:400;text-align:center;">50</div>
<div class="t" style="left:1100.89px;width:1200px;top:1169.02px;font-size:21px;line-height:21px;color:#000;font-weight:400;text-align:center;">1 try</div>
<div class="b" style="left:1767.05px;top:1116.80px;width:125.13px;height:80.00px;background:#60e760"></div>
<div class="t" style="left:1229.62px;width:1200px;top:1124.56px;font-size:31px;line-height:31px;color:#000;font-weight:400;text-align:center;">166</div>
<div class="t" style="left:1229.62px;width:1200px;top:1169.02px;font-size:21px;line-height:21px;color:#000;font-weight:400;text-align:center;">1 try</div>
<div class="b" style="left:2024.51px;top:1116.80px;width:125.13px;height:80.00px;background:#60e760"></div>
<div class="t" style="left:1487.07px;width:1200px;top:1124.56px;font-size:31px;line-height:31px;color:#000;font-weight:400;text-align:center;">101</div>
<div class="t" style="left:1487.07px;width:1200px;top:1169.02px;font-size:21px;line-height:21px;color:#000;font-weight:400;text-align:center;">3 tries</div>
<div class="b" style="left:2281.96px;top:1116.80px;width:125.13px;height:80.00px;background:#60e760"></div>
<div class="t" style="left:1744.53px;width:1200px;top:1124.56px;font-size:31px;line-height:31px;color:#000;font-weight:400;text-align:center;">152</div>
<div class="t" style="left:1744.53px;width:1200px;top:1169.02px;font-size:21px;line-height:21px;color:#000;font-weight:400;text-align:center;">1 try</div>
<div class="b" style="left:2410.69px;top:1116.80px;width:125.13px;height:80.00px;background:#60e760"></div>
<div class="t" style="left:1873.25px;width:1200px;top:1124.56px;font-size:31px;line-height:31px;color:#000;font-weight:400;text-align:center;">25</div>
<div class="t" style="left:1873.25px;width:1200px;top:1169.02px;font-size:21px;line-height:21px;color:#000;font-weight:400;text-align:center;">2 tries</div>
<div class="b" style="left:2539.42px;top:1116.80px;width:125.13px;height:80.00px;background:#60e760"></div>
<div class="t" style="left:2001.98px;width:1200px;top:1124.56px;font-size:31px;line-height:31px;color:#000;font-weight:400;text-align:center;">8</div>
<div class="t" style="left:2001.98px;width:1200px;top:1169.02px;font-size:21px;line-height:21px;color:#000;font-weight:400;text-align:center;">1 try</div>
<div class="b" style="left:2668.14px;top:1116.80px;width:125.13px;height:80.00px;background:#60e760"></div>
<div class="t" style="left:2130.71px;width:1200px;top:1124.56px;font-size:31px;line-height:31px;color:#000;font-weight:400;text-align:center;">209</div>
<div class="t" style="left:2130.71px;width:1200px;top:1169.02px;font-size:21px;line-height:21px;color:#000;font-weight:400;text-align:center;">5 tries</div>
<div class="b" style="left:2796.87px;top:1116.80px;width:125.13px;height:80.00px;background:#60e760"></div>
<div class="t" style="left:2259.43px;width:1200px;top:1124.56px;font-size:31px;line-height:31px;color:#000;font-weight:400;text-align:center;">22</div>
<div class="t" style="left:2259.43px;width:1200px;top:1169.02px;font-size:21px;line-height:21px;color:#000;font-weight:400;text-align:center;">1 try</div>
<div class="b" style="left:439.00px;top:1201.80px;width:2485.00px;height:2.00px;background:#000"></div>
<div class="b" style="left:501.00px;top:1111.80px;width:2.00px;height:91.80px;background:#bfbfbf"></div>
<div class="b" style="left:1346.00px;top:1111.80px;width:2.00px;height:91.80px;background:#bfbfbf"></div>
<div class="b" style="left:1506.00px;top:1111.80px;width:2.00px;height:91.80px;background:#bfbfbf"></div>
<div class="b" style="left:439.00px;top:1203.60px;width:62.00px;height:89.00px;background:#aaaaaa"></div>
<div class="t" style="left:-130.00px;width:1200px;top:1234.09px;font-size:26px;line-height:26px;color:#000;font-weight:400;text-align:center;">8</div>
<svg class="b" style="left:510px;top:1222.30px" width="70" height="52" viewBox="0 0 70 52"><defs><clipPath id="c510_12223"><rect x="0" y="0" width="70" height="52" rx="9" ry="9"/></clipPath></defs><g clip-path="url(#c510_12223)"><rect width="70" height="17.4" fill="#ae1c28"/><rect y="17.4" width="70" height="17.4" fill="#fff"/><rect y="34.8" width="70" height="17.2" fill="#21468b"/></g><rect x="0.5" y="0.5" width="69" height="51" rx="8.5" ry="8.5" fill="none" stroke="rgba(0,0,0,0.1)" stroke-width="1"/></svg>
<div class="t" style="right:2031.00px;top:1219.59px;font-size:26px;line-height:26px;color:#000;font-weight:700;text-align:right;">Q++</div>
<div class="t" style="right:2031.00px;top:1256.99px;font-size:20.8px;line-height:20.8px;color:#5f5f5f;font-weight:400;text-align:right;">Leiden University</div>
<div class="t" style="left:787.50px;width:1200px;top:1234.59px;font-size:26px;line-height:26px;color:#000;font-weight:700;text-align:center;">8</div>
<div class="t" style="right:1877.00px;top:1234.59px;font-size:26px;line-height:26px;color:#000;font-weight:400;text-align:right;">918</div>
<div class="b" style="left:1509.60px;top:1207.60px;width:125.13px;height:80.00px;background:#6666ff"></div>
<div class="t" style="left:972.16px;width:1200px;top:1259.82px;font-size:21px;line-height:21px;color:#000;font-weight:400;text-align:center;">0 + 1 tries</div>
<div class="b" style="left:1638.33px;top:1207.60px;width:125.13px;height:80.00px;background:#60e760"></div>
<div class="t" style="left:1100.89px;width:1200px;top:1215.36px;font-size:31px;line-height:31px;color:#000;font-weight:400;text-align:center;">123</div>
<div class="t" style="left:1100.89px;width:1200px;top:1259.82px;font-size:21px;line-height:21px;color:#000;font-weight:400;text-align:center;">1 try</div>
<div class="b" style="left:1767.05px;top:1207.60px;width:125.13px;height:80.00px;background:#60e760"></div>
<div class="t" style="left:1229.62px;width:1200px;top:1215.36px;font-size:31px;line-height:31px;color:#000;font-weight:400;text-align:center;">77</div>
<div class="t" style="left:1229.62px;width:1200px;top:1259.82px;font-size:21px;line-height:21px;color:#000;font-weight:400;text-align:center;">1 try</div>
<div class="b" style="left:2024.51px;top:1207.60px;width:125.13px;height:80.00px;background:#60e760"></div>
<div class="t" style="left:1487.07px;width:1200px;top:1215.36px;font-size:31px;line-height:31px;color:#000;font-weight:400;text-align:center;">205</div>
<div class="t" style="left:1487.07px;width:1200px;top:1259.82px;font-size:21px;line-height:21px;color:#000;font-weight:400;text-align:center;">1 try</div>
<div class="b" style="left:2281.96px;top:1207.60px;width:125.13px;height:80.00px;background:#60e760"></div>
<div class="t" style="left:1744.53px;width:1200px;top:1215.36px;font-size:31px;line-height:31px;color:#000;font-weight:400;text-align:center;">135</div>
<div class="t" style="left:1744.53px;width:1200px;top:1259.82px;font-size:21px;line-height:21px;color:#000;font-weight:400;text-align:center;">2 tries</div>
<div class="b" style="left:2410.69px;top:1207.60px;width:125.13px;height:80.00px;background:#60e760"></div>
<div class="t" style="left:1873.25px;width:1200px;top:1215.36px;font-size:31px;line-height:31px;color:#000;font-weight:400;text-align:center;">39</div>
<div class="t" style="left:1873.25px;width:1200px;top:1259.82px;font-size:21px;line-height:21px;color:#000;font-weight:400;text-align:center;">2 tries</div>
<div class="b" style="left:2539.42px;top:1207.60px;width:125.13px;height:80.00px;background:#60e760"></div>
<div class="t" style="left:2001.98px;width:1200px;top:1215.36px;font-size:31px;line-height:31px;color:#000;font-weight:400;text-align:center;">13</div>
<div class="t" style="left:2001.98px;width:1200px;top:1259.82px;font-size:21px;line-height:21px;color:#000;font-weight:400;text-align:center;">1 try</div>
<div class="b" style="left:2668.14px;top:1207.60px;width:125.13px;height:80.00px;background:#60e760"></div>
<div class="t" style="left:2130.71px;width:1200px;top:1215.36px;font-size:31px;line-height:31px;color:#000;font-weight:400;text-align:center;">236</div>
<div class="t" style="left:2130.71px;width:1200px;top:1259.82px;font-size:21px;line-height:21px;color:#000;font-weight:400;text-align:center;">2 tries</div>
<div class="b" style="left:2796.87px;top:1207.60px;width:125.13px;height:80.00px;background:#60e760"></div>
<div class="t" style="left:2259.43px;width:1200px;top:1215.36px;font-size:31px;line-height:31px;color:#000;font-weight:400;text-align:center;">30</div>
<div class="t" style="left:2259.43px;width:1200px;top:1259.82px;font-size:21px;line-height:21px;color:#000;font-weight:400;text-align:center;">1 try</div>
<div class="b" style="left:439.00px;top:1292.60px;width:2485.00px;height:2.00px;background:#000"></div>
<div class="b" style="left:501.00px;top:1202.60px;width:2.00px;height:91.80px;background:#bfbfbf"></div>
<div class="b" style="left:1346.00px;top:1202.60px;width:2.00px;height:91.80px;background:#bfbfbf"></div>
<div class="b" style="left:1506.00px;top:1202.60px;width:2.00px;height:91.80px;background:#bfbfbf"></div>
<div class="b" style="left:439.00px;top:1294.40px;width:62.00px;height:89.00px;background:#c08e55"></div>
<div class="t" style="left:-130.00px;width:1200px;top:1324.89px;font-size:26px;line-height:26px;color:#000;font-weight:400;text-align:center;">9</div>
<svg class="b" style="left:510px;top:1313.10px" width="70" height="52" viewBox="0 0 70 52"><defs><clipPath id="c510_13131"><rect x="0" y="0" width="70" height="52" rx="9" ry="9"/></clipPath></defs><g clip-path="url(#c510_13131)"><rect width="70" height="17.4" fill="#000"/><rect y="17.4" width="70" height="17.4" fill="#dd0000"/><rect y="34.8" width="70" height="17.2" fill="#ffce00"/></g><rect x="0.5" y="0.5" width="69" height="51" rx="8.5" ry="8.5" fill="none" stroke="rgba(0,0,0,0.1)" stroke-width="1"/></svg>
<div class="t" style="right:2031.00px;top:1310.39px;font-size:26px;line-height:26px;color:#000;font-weight:700;text-align:right;">Let&#x27;s party!</div>
<div class="t" style="right:2031.00px;top:1347.79px;font-size:20.8px;line-height:20.8px;color:#5f5f5f;font-weight:400;text-align:right;">Karlsruhe Institute of Technology (KIT)</div>
<div class="t" style="left:787.50px;width:1200px;top:1325.39px;font-size:26px;line-height:26px;color:#000;font-weight:700;text-align:center;">8</div>
<div class="t" style="right:1877.00px;top:1325.39px;font-size:26px;line-height:26px;color:#000;font-weight:400;text-align:right;">953</div>
<div class="b" style="left:1509.60px;top:1298.40px;width:125.13px;height:80.00px;background:#60e760"></div>
<div class="t" style="left:972.16px;width:1200px;top:1306.16px;font-size:31px;line-height:31px;color:#000;font-weight:400;text-align:center;">235</div>
<div class="t" style="left:972.16px;width:1200px;top:1350.62px;font-size:21px;line-height:21px;color:#000;font-weight:400;text-align:center;">1 try</div>
<div class="b" style="left:1638.33px;top:1298.40px;width:125.13px;height:80.00px;background:#60e760"></div>
<div class="t" style="left:1100.89px;width:1200px;top:1306.16px;font-size:31px;line-height:31px;color:#000;font-weight:400;text-align:center;">72</div>
<div class="t" style="left:1100.89px;width:1200px;top:1350.62px;font-size:21px;line-height:21px;color:#000;font-weight:400;text-align:center;">1 try</div>
<div class="b" style="left:1767.05px;top:1298.40px;width:125.13px;height:80.00px;background:#60e760"></div>
<div class="t" style="left:1229.62px;width:1200px;top:1306.16px;font-size:31px;line-height:31px;color:#000;font-weight:400;text-align:center;">173</div>
<div class="t" style="left:1229.62px;width:1200px;top:1350.62px;font-size:21px;line-height:21px;color:#000;font-weight:400;text-align:center;">5 tries</div>
<div class="b" style="left:2024.51px;top:1298.40px;width:125.13px;height:80.00px;background:#6666ff"></div>
<div class="t" style="left:1487.07px;width:1200px;top:1350.62px;font-size:21px;line-height:21px;color:#000;font-weight:400;text-align:center;">1 + 3 tries</div>
<div class="b" style="left:2281.96px;top:1298.40px;width:125.13px;height:80.00px;background:#60e760"></div>
<div class="t" style="left:1744.53px;width:1200px;top:1306.16px;font-size:31px;line-height:31px;color:#000;font-weight:400;text-align:center;">110</div>
<div class="t" style="left:1744.53px;width:1200px;top:1350.62px;font-size:21px;line-height:21px;color:#000;font-weight:400;text-align:center;">2 tries</div>
<div class="b" style="left:2410.69px;top:1298.40px;width:125.13px;height:80.00px;background:#60e760"></div>
<div class="t" style="left:1873.25px;width:1200px;top:1306.16px;font-size:31px;line-height:31px;color:#000;font-weight:400;text-align:center;">24</div>
<div class="t" style="left:1873.25px;width:1200px;top:1350.62px;font-size:21px;line-height:21px;color:#000;font-weight:400;text-align:center;">1 try</div>
<div class="b" style="left:2539.42px;top:1298.40px;width:125.13px;height:80.00px;background:#60e760"></div>
<div class="t" style="left:2001.98px;width:1200px;top:1306.16px;font-size:31px;line-height:31px;color:#000;font-weight:400;text-align:center;">12</div>
<div class="t" style="left:2001.98px;width:1200px;top:1350.62px;font-size:21px;line-height:21px;color:#000;font-weight:400;text-align:center;">1 try</div>
<div class="b" style="left:2668.14px;top:1298.40px;width:125.13px;height:80.00px;background:#60e760"></div>
<div class="t" style="left:2130.71px;width:1200px;top:1306.16px;font-size:31px;line-height:31px;color:#000;font-weight:400;text-align:center;">179</div>
<div class="t" style="left:2130.71px;width:1200px;top:1350.62px;font-size:21px;line-height:21px;color:#000;font-weight:400;text-align:center;">2 tries</div>
<div class="b" style="left:2796.87px;top:1298.40px;width:125.13px;height:80.00px;background:#60e760"></div>
<div class="t" style="left:2259.43px;width:1200px;top:1306.16px;font-size:31px;line-height:31px;color:#000;font-weight:400;text-align:center;">28</div>
<div class="t" style="left:2259.43px;width:1200px;top:1350.62px;font-size:21px;line-height:21px;color:#000;font-weight:400;text-align:center;">1 try</div>
<div class="b" style="left:439.00px;top:1383.40px;width:2485.00px;height:2.00px;background:#000"></div>
<div class="b" style="left:501.00px;top:1293.40px;width:2.00px;height:91.80px;background:#bfbfbf"></div>
<div class="b" style="left:1346.00px;top:1293.40px;width:2.00px;height:91.80px;background:#bfbfbf"></div>
<div class="b" style="left:1506.00px;top:1293.40px;width:2.00px;height:91.80px;background:#bfbfbf"></div>
<div class="b" style="left:439.00px;top:1385.20px;width:62.00px;height:89.00px;background:#c08e55"></div>
<div class="t" style="left:-130.00px;width:1200px;top:1415.69px;font-size:26px;line-height:26px;color:#000;font-weight:400;text-align:center;">10</div>
<svg class="b" style="left:510px;top:1403.90px" width="70" height="52" viewBox="0 0 70 52"><defs><clipPath id="c510_14038"><rect x="0" y="0" width="70" height="52" rx="9" ry="9"/></clipPath></defs><g clip-path="url(#c510_14038)"><rect width="70" height="17.4" fill="#ae1c28"/><rect y="17.4" width="70" height="17.4" fill="#fff"/><rect y="34.8" width="70" height="17.2" fill="#21468b"/></g><rect x="0.5" y="0.5" width="69" height="51" rx="8.5" ry="8.5" fill="none" stroke="rgba(0,0,0,0.1)" stroke-width="1"/></svg>
<div class="t" style="right:2031.00px;top:1401.19px;font-size:26px;line-height:26px;color:#000;font-weight:700;text-align:right;">The Thorycoders</div>
<div class="t" style="right:2031.00px;top:1438.59px;font-size:20.8px;line-height:20.8px;color:#5f5f5f;font-weight:400;text-align:right;">Universiteit Utrecht</div>
<div class="t" style="left:787.50px;width:1200px;top:1416.19px;font-size:26px;line-height:26px;color:#000;font-weight:700;text-align:center;">8</div>
<div class="t" style="right:1877.00px;top:1416.19px;font-size:26px;line-height:26px;color:#000;font-weight:400;text-align:right;">961</div>
<div class="b" style="left:1638.33px;top:1389.20px;width:125.13px;height:80.00px;background:#60e760"></div>
<div class="t" style="left:1100.89px;width:1200px;top:1396.96px;font-size:31px;line-height:31px;color:#000;font-weight:400;text-align:center;">62</div>
<div class="t" style="left:1100.89px;width:1200px;top:1441.42px;font-size:21px;line-height:21px;color:#000;font-weight:400;text-align:center;">2 tries</div>
<div class="b" style="left:1767.05px;top:1389.20px;width:125.13px;height:80.00px;background:#60e760"></div>
<div class="t" style="left:1229.62px;width:1200px;top:1396.96px;font-size:31px;line-height:31px;color:#000;font-weight:400;text-align:center;">179</div>
<div class="t" style="left:1229.62px;width:1200px;top:1441.42px;font-size:21px;line-height:21px;color:#000;font-weight:400;text-align:center;">2 tries</div>
<div class="b" style="left:2024.51px;top:1389.20px;width:125.13px;height:80.00px;background:#60e760"></div>
<div class="t" style="left:1487.07px;width:1200px;top:1396.96px;font-size:31px;line-height:31px;color:#000;font-weight:400;text-align:center;">150</div>
<div class="t" style="left:1487.07px;width:1200px;top:1441.42px;font-size:21px;line-height:21px;color:#000;font-weight:400;text-align:center;">1 try</div>
<div class="b" style="left:2281.96px;top:1389.20px;width:125.13px;height:80.00px;background:#60e760"></div>
<div class="t" style="left:1744.53px;width:1200px;top:1396.96px;font-size:31px;line-height:31px;color:#000;font-weight:400;text-align:center;">209</div>
<div class="t" style="left:1744.53px;width:1200px;top:1441.42px;font-size:21px;line-height:21px;color:#000;font-weight:400;text-align:center;">1 try</div>
<div class="b" style="left:2410.69px;top:1389.20px;width:125.13px;height:80.00px;background:#60e760"></div>
<div class="t" style="left:1873.25px;width:1200px;top:1396.96px;font-size:31px;line-height:31px;color:#000;font-weight:400;text-align:center;">33</div>
<div class="t" style="left:1873.25px;width:1200px;top:1441.42px;font-size:21px;line-height:21px;color:#000;font-weight:400;text-align:center;">2 tries</div>
<div class="b" style="left:2539.42px;top:1389.20px;width:125.13px;height:80.00px;background:#60e760"></div>
<div class="t" style="left:2001.98px;width:1200px;top:1396.96px;font-size:31px;line-height:31px;color:#000;font-weight:400;text-align:center;">22</div>
<div class="t" style="left:2001.98px;width:1200px;top:1441.42px;font-size:21px;line-height:21px;color:#000;font-weight:400;text-align:center;">1 try</div>
<div class="b" style="left:2668.14px;top:1389.20px;width:125.13px;height:80.00px;background:#60e760"></div>
<div class="t" style="left:2130.71px;width:1200px;top:1396.96px;font-size:31px;line-height:31px;color:#000;font-weight:400;text-align:center;">211</div>
<div class="t" style="left:2130.71px;width:1200px;top:1441.42px;font-size:21px;line-height:21px;color:#000;font-weight:400;text-align:center;">2 tries</div>
<div class="b" style="left:2796.87px;top:1389.20px;width:125.13px;height:80.00px;background:#60e760"></div>
<div class="t" style="left:2259.43px;width:1200px;top:1396.96px;font-size:31px;line-height:31px;color:#000;font-weight:400;text-align:center;">15</div>
<div class="t" style="left:2259.43px;width:1200px;top:1441.42px;font-size:21px;line-height:21px;color:#000;font-weight:400;text-align:center;">1 try</div>
<div class="b" style="left:439.00px;top:1474.20px;width:2485.00px;height:2.00px;background:#000"></div>
<div class="b" style="left:501.00px;top:1384.20px;width:2.00px;height:91.80px;background:#bfbfbf"></div>
<div class="b" style="left:1346.00px;top:1384.20px;width:2.00px;height:91.80px;background:#bfbfbf"></div>
<div class="b" style="left:1506.00px;top:1384.20px;width:2.00px;height:91.80px;background:#bfbfbf"></div>
<div class="b" style="left:439.00px;top:1476.00px;width:62.00px;height:89.00px;background:#c08e55"></div>
<div class="t" style="left:-130.00px;width:1200px;top:1506.49px;font-size:26px;line-height:26px;color:#000;font-weight:400;text-align:center;">11</div>
<svg class="b" style="left:510px;top:1494.70px" width="70" height="52" viewBox="0 0 70 52"><defs><clipPath id="c510_14947"><rect x="0" y="0" width="70" height="52" rx="9" ry="9"/></clipPath></defs><g clip-path="url(#c510_14947)"><rect width="70" height="17.4" fill="#000"/><rect y="17.4" width="70" height="17.4" fill="#dd0000"/><rect y="34.8" width="70" height="17.2" fill="#ffce00"/></g><rect x="0.5" y="0.5" width="69" height="51" rx="8.5" ry="8.5" fill="none" stroke="rgba(0,0,0,0.1)" stroke-width="1"/></svg>
<div class="t" style="right:2031.00px;top:1491.99px;font-size:26px;line-height:26px;color:#000;font-weight:700;text-align:right;">_=_=&gt;_+_&lt;&lt;_;_(-~{})+[]+(++[[]][+[]]+~[]*~[])</div>
<div class="t" style="right:2031.00px;top:1529.39px;font-size:20.8px;line-height:20.8px;color:#5f5f5f;font-weight:400;text-align:right;">Technische Universitaet Muenchen</div>
<div class="t" style="left:787.50px;width:1200px;top:1506.99px;font-size:26px;line-height:26px;color:#000;font-weight:700;text-align:center;">7</div>
<div class="t" style="right:1877.00px;top:1506.99px;font-size:26px;line-height:26px;color:#000;font-weight:400;text-align:right;">612</div>
<div class="b" style="left:1638.33px;top:1480.00px;width:125.13px;height:80.00px;background:#60e760"></div>
<div class="t" style="left:1100.89px;width:1200px;top:1487.76px;font-size:31px;line-height:31px;color:#000;font-weight:400;text-align:center;">138</div>
<div class="t" style="left:1100.89px;width:1200px;top:1532.22px;font-size:21px;line-height:21px;color:#000;font-weight:400;text-align:center;">1 try</div>
<div class="b" style="left:1767.05px;top:1480.00px;width:125.13px;height:80.00px;background:#60e760"></div>
<div class="t" style="left:1229.62px;width:1200px;top:1487.76px;font-size:31px;line-height:31px;color:#000;font-weight:400;text-align:center;">60</div>
<div class="t" style="left:1229.62px;width:1200px;top:1532.22px;font-size:21px;line-height:21px;color:#000;font-weight:400;text-align:center;">1 try</div>
<div class="b" style="left:2024.51px;top:1480.00px;width:125.13px;height:80.00px;background:#6666ff"></div>
<div class="t" style="left:1487.07px;width:1200px;top:1532.22px;font-size:21px;line-height:21px;color:#000;font-weight:400;text-align:center;">1 + 2 tries</div>
<div class="b" style="left:2281.96px;top:1480.00px;width:125.13px;height:80.00px;background:#60e760"></div>
<div class="t" style="left:1744.53px;width:1200px;top:1487.76px;font-size:31px;line-height:31px;color:#000;font-weight:400;text-align:center;">154</div>
<div class="t" style="left:1744.53px;width:1200px;top:1532.22px;font-size:21px;line-height:21px;color:#000;font-weight:400;text-align:center;">1 try</div>
<div class="b" style="left:2410.69px;top:1480.00px;width:125.13px;height:80.00px;background:#60e760"></div>
<div class="t" style="left:1873.25px;width:1200px;top:1487.76px;font-size:31px;line-height:31px;color:#000;font-weight:400;text-align:center;">26</div>
<div class="t" style="left:1873.25px;width:1200px;top:1532.22px;font-size:21px;line-height:21px;color:#000;font-weight:400;text-align:center;">2 tries</div>
<div class="b" style="left:2539.42px;top:1480.00px;width:125.13px;height:80.00px;background:#60e760"></div>
<div class="t" style="left:2001.98px;width:1200px;top:1487.76px;font-size:31px;line-height:31px;color:#000;font-weight:400;text-align:center;">23</div>
<div class="t" style="left:2001.98px;width:1200px;top:1532.22px;font-size:21px;line-height:21px;color:#000;font-weight:400;text-align:center;">1 try</div>
<div class="b" style="left:2668.14px;top:1480.00px;width:125.13px;height:80.00px;background:#60e760"></div>
<div class="t" style="left:2130.71px;width:1200px;top:1487.76px;font-size:31px;line-height:31px;color:#000;font-weight:400;text-align:center;">117</div>
<div class="t" style="left:2130.71px;width:1200px;top:1532.22px;font-size:21px;line-height:21px;color:#000;font-weight:400;text-align:center;">3 tries</div>
<div class="b" style="left:2796.87px;top:1480.00px;width:125.13px;height:80.00px;background:#60e760"></div>
<div class="t" style="left:2259.43px;width:1200px;top:1487.76px;font-size:31px;line-height:31px;color:#000;font-weight:400;text-align:center;">34</div>
<div class="t" style="left:2259.43px;width:1200px;top:1532.22px;font-size:21px;line-height:21px;color:#000;font-weight:400;text-align:center;">1 try</div>
<div class="b" style="left:439.00px;top:1565.00px;width:2485.00px;height:2.00px;background:#000"></div>
<div class="b" style="left:501.00px;top:1475.00px;width:2.00px;height:91.80px;background:#bfbfbf"></div>
<div class="b" style="left:1346.00px;top:1475.00px;width:2.00px;height:91.80px;background:#bfbfbf"></div>
<div class="b" style="left:1506.00px;top:1475.00px;width:2.00px;height:91.80px;background:#bfbfbf"></div>
<div class="b" style="left:439.00px;top:1566.80px;width:62.00px;height:89.00px;background:#c08e55"></div>
<div class="t" style="left:-130.00px;width:1200px;top:1597.29px;font-size:26px;line-height:26px;color:#000;font-weight:400;text-align:center;">12</div>
<svg class="b" style="left:510px;top:1585.50px" width="70" height="52" viewBox="0 0 70 52"><defs><clipPath id="c510_15855"><rect x="0" y="0" width="70" height="52" rx="9" ry="9"/></clipPath></defs><g clip-path="url(#c510_15855)"><rect width="70" height="17.4" fill="#000"/><rect y="17.4" width="70" height="17.4" fill="#dd0000"/><rect y="34.8" width="70" height="17.2" fill="#ffce00"/></g><rect x="0.5" y="0.5" width="69" height="51" rx="8.5" ry="8.5" fill="none" stroke="rgba(0,0,0,0.1)" stroke-width="1"/></svg>
<div class="t" style="right:2031.00px;top:1582.79px;font-size:26px;line-height:26px;color:#000;font-weight:700;text-align:right;">incogniTUM</div>
<div class="t" style="right:2031.00px;top:1620.19px;font-size:20.8px;line-height:20.8px;color:#5f5f5f;font-weight:400;text-align:right;">Technische Universitaet Muenchen</div>
<div class="t" style="left:787.50px;width:1200px;top:1597.79px;font-size:26px;line-height:26px;color:#000;font-weight:700;text-align:center;">7</div>
<div class="t" style="right:1877.00px;top:1597.79px;font-size:26px;line-height:26px;color:#000;font-weight:400;text-align:right;">659</div>
<div class="b" style="left:1509.60px;top:1570.80px;width:125.13px;height:80.00px;background:#6666ff"></div>
<div class="t" style="left:972.16px;width:1200px;top:1623.02px;font-size:21px;line-height:21px;color:#000;font-weight:400;text-align:center;">2 + 1 tries</div>
<div class="b" style="left:1638.33px;top:1570.80px;width:125.13px;height:80.00px;background:#60e760"></div>
<div class="t" style="left:1100.89px;width:1200px;top:1578.56px;font-size:31px;line-height:31px;color:#000;font-weight:400;text-align:center;">58</div>
<div class="t" style="left:1100.89px;width:1200px;top:1623.02px;font-size:21px;line-height:21px;color:#000;font-weight:400;text-align:center;">1 try</div>
<div class="b" style="left:1767.05px;top:1570.80px;width:125.13px;height:80.00px;background:#60e760"></div>
<div class="t" style="left:1229.62px;width:1200px;top:1578.56px;font-size:31px;line-height:31px;color:#000;font-weight:400;text-align:center;">107</div>
<div class="t" style="left:1229.62px;width:1200px;top:1623.02px;font-size:21px;line-height:21px;color:#000;font-weight:400;text-align:center;">1 try</div>
<div class="b" style="left:2024.51px;top:1570.80px;width:125.13px;height:80.00px;background:#60e760"></div>
<div class="t" style="left:1487.07px;width:1200px;top:1578.56px;font-size:31px;line-height:31px;color:#000;font-weight:400;text-align:center;">165</div>
<div class="t" style="left:1487.07px;width:1200px;top:1623.02px;font-size:21px;line-height:21px;color:#000;font-weight:400;text-align:center;">3 tries</div>
<div class="b" style="left:2281.96px;top:1570.80px;width:125.13px;height:80.00px;background:#60e760"></div>
<div class="t" style="left:1744.53px;width:1200px;top:1578.56px;font-size:31px;line-height:31px;color:#000;font-weight:400;text-align:center;">207</div>
<div class="t" style="left:1744.53px;width:1200px;top:1623.02px;font-size:21px;line-height:21px;color:#000;font-weight:400;text-align:center;">1 try</div>
<div class="b" style="left:2410.69px;top:1570.80px;width:125.13px;height:80.00px;background:#60e760"></div>
<div class="t" style="left:1873.25px;width:1200px;top:1578.56px;font-size:31px;line-height:31px;color:#000;font-weight:400;text-align:center;">32</div>
<div class="t" style="left:1873.25px;width:1200px;top:1623.02px;font-size:21px;line-height:21px;color:#000;font-weight:400;text-align:center;">1 try</div>
<div class="b" style="left:2539.42px;top:1570.80px;width:125.13px;height:80.00px;background:#60e760"></div>
<div class="t" style="left:2001.98px;width:1200px;top:1578.56px;font-size:31px;line-height:31px;color:#000;font-weight:400;text-align:center;">15</div>
<div class="t" style="left:2001.98px;width:1200px;top:1623.02px;font-size:21px;line-height:21px;color:#000;font-weight:400;text-align:center;">1 try</div>
<div class="b" style="left:2668.14px;top:1570.80px;width:125.13px;height:80.00px;background:#6666ff"></div>
<div class="t" style="left:2130.71px;width:1200px;top:1623.02px;font-size:21px;line-height:21px;color:#000;font-weight:400;text-align:center;">0 + 3 tries</div>
<div class="b" style="left:2796.87px;top:1570.80px;width:125.13px;height:80.00px;background:#60e760"></div>
<div class="t" style="left:2259.43px;width:1200px;top:1578.56px;font-size:31px;line-height:31px;color:#000;font-weight:400;text-align:center;">35</div>
<div class="t" style="left:2259.43px;width:1200px;top:1623.02px;font-size:21px;line-height:21px;color:#000;font-weight:400;text-align:center;">1 try</div>
<div class="b" style="left:439.00px;top:1655.80px;width:2485.00px;height:2.00px;background:#000"></div>
<div class="b" style="left:501.00px;top:1565.80px;width:2.00px;height:91.80px;background:#bfbfbf"></div>
<div class="b" style="left:1346.00px;top:1565.80px;width:2.00px;height:91.80px;background:#bfbfbf"></div>
<div class="b" style="left:1506.00px;top:1565.80px;width:2.00px;height:91.80px;background:#bfbfbf"></div>
<div class="t" style="left:-130.00px;width:1200px;top:1688.09px;font-size:26px;line-height:26px;color:#000;font-weight:400;text-align:center;">13</div>
<svg class="b" style="left:510px;top:1676.30px" width="70" height="52" viewBox="0 0 70 52"><defs><clipPath id="c510_16763"><rect x="0" y="0" width="70" height="52" rx="9" ry="9"/></clipPath></defs><g clip-path="url(#c510_16763)"><rect width="70" height="52" fill="#012169"/><path d="M0 0 L70 52 M70 0 L0 52" stroke="#fff" stroke-width="11"/><path d="M-2 -1.5 L35 26 M72 53.5 L35 26" stroke="#c8102e" stroke-width="3.6" transform="translate(-1.8,2.4)"/><path d="M72 -1.5 L35 26 M-2 53.5 L35 26" stroke="#c8102e" stroke-width="3.6" transform="translate(1.8,2.4)"/><rect x="26" y="0" width="18" height="52" fill="#fff"/><rect x="0" y="17.4" width="70" height="17.4" fill="#fff"/><rect x="30" y="0" width="10" height="52" fill="#c8102e"/><rect x="0" y="21.2" width="70" height="10.2" fill="#c8102e"/></g><rect x="0.5" y="0.5" width="69" height="51" rx="8.5" ry="8.5" fill="none" stroke="rgba(0,0,0,0.1)" stroke-width="1"/></svg>
<div class="t" style="right:2031.00px;top:1673.59px;font-size:26px;line-height:26px;color:#000;font-weight:700;text-align:right;">Me[<svg width="27" height="16" viewBox="0 8 27 16" style="vertical-align:-1px;overflow:visible"><path fill="#000" d="M13.5 0 C10 5 4.5 9 4.5 14 C4.5 17.6 7.5 19.6 10.2 19.2 C11.5 19 12.6 18.2 13 17.2 C12.8 20 12 21.6 10.3 23 L16.7 23 C15 21.6 14.2 20 14 17.2 C14.4 18.2 15.5 19 16.8 19.2 C19.5 19.6 22.5 17.6 22.5 14 C22.5 9 17 5 13.5 0 Z"/></svg>]talci</div>
<div class="t" style="right:2031.00px;top:1710.99px;font-size:20.8px;line-height:20.8px;color:#5f5f5f;font-weight:400;text-align:right;">University of Cambridge</div>
<div class="t" style="left:787.50px;width:1200px;top:1688.59px;font-size:26px;line-height:26px;color:#000;font-weight:700;text-align:center;">7</div>
<div class="t" style="right:1877.00px;top:1688.59px;font-size:26px;line-height:26px;color:#000;font-weight:400;text-align:right;">754</div>
<div class="b" style="left:1638.33px;top:1661.60px;width:125.13px;height:80.00px;background:#60e760"></div>
<div class="t" style="left:1100.89px;width:1200px;top:1669.36px;font-size:31px;line-height:31px;color:#000;font-weight:400;text-align:center;">148</div>
<div class="t" style="left:1100.89px;width:1200px;top:1713.82px;font-size:21px;line-height:21px;color:#000;font-weight:400;text-align:center;">2 tries</div>
<div class="b" style="left:1767.05px;top:1661.60px;width:125.13px;height:80.00px;background:#60e760"></div>
<div class="t" style="left:1229.62px;width:1200px;top:1669.36px;font-size:31px;line-height:31px;color:#000;font-weight:400;text-align:center;">56</div>
<div class="t" style="left:1229.62px;width:1200px;top:1713.82px;font-size:21px;line-height:21px;color:#000;font-weight:400;text-align:center;">1 try</div>
<div class="b" style="left:2024.51px;top:1661.60px;width:125.13px;height:80.00px;background:#60e760"></div>
<div class="t" style="left:1487.07px;width:1200px;top:1669.36px;font-size:31px;line-height:31px;color:#000;font-weight:400;text-align:center;">176</div>
<div class="t" style="left:1487.07px;width:1200px;top:1713.82px;font-size:21px;line-height:21px;color:#000;font-weight:400;text-align:center;">2 tries</div>
<div class="b" style="left:2281.96px;top:1661.60px;width:125.13px;height:80.00px;background:#60e760"></div>
<div class="t" style="left:1744.53px;width:1200px;top:1669.36px;font-size:31px;line-height:31px;color:#000;font-weight:400;text-align:center;">212</div>
<div class="t" style="left:1744.53px;width:1200px;top:1713.82px;font-size:21px;line-height:21px;color:#000;font-weight:400;text-align:center;">3 tries</div>
<div class="b" style="left:2410.69px;top:1661.60px;width:125.13px;height:80.00px;background:#60e760"></div>
<div class="t" style="left:1873.25px;width:1200px;top:1669.36px;font-size:31px;line-height:31px;color:#000;font-weight:400;text-align:center;">36</div>
<div class="t" style="left:1873.25px;width:1200px;top:1713.82px;font-size:21px;line-height:21px;color:#000;font-weight:400;text-align:center;">2 tries</div>
<div class="b" style="left:2539.42px;top:1661.60px;width:125.13px;height:80.00px;background:#60e760"></div>
<div class="t" style="left:2001.98px;width:1200px;top:1669.36px;font-size:31px;line-height:31px;color:#000;font-weight:400;text-align:center;">5</div>
<div class="t" style="left:2001.98px;width:1200px;top:1713.82px;font-size:21px;line-height:21px;color:#000;font-weight:400;text-align:center;">1 try</div>
<div class="b" style="left:2668.14px;top:1661.60px;width:125.13px;height:80.00px;background:#6666ff"></div>
<div class="t" style="left:2130.71px;width:1200px;top:1713.82px;font-size:21px;line-height:21px;color:#000;font-weight:400;text-align:center;">1 + 2 tries</div>
<div class="b" style="left:2796.87px;top:1661.60px;width:125.13px;height:80.00px;background:#60e760"></div>
<div class="t" style="left:2259.43px;width:1200px;top:1669.36px;font-size:31px;line-height:31px;color:#000;font-weight:400;text-align:center;">21</div>
<div class="t" style="left:2259.43px;width:1200px;top:1713.82px;font-size:21px;line-height:21px;color:#000;font-weight:400;text-align:center;">1 try</div>
<div class="b" style="left:439.00px;top:1746.60px;width:2485.00px;height:2.00px;background:#000"></div>
<div class="b" style="left:501.00px;top:1656.60px;width:2.00px;height:91.80px;background:#bfbfbf"></div>
<div class="b" style="left:1346.00px;top:1656.60px;width:2.00px;height:91.80px;background:#bfbfbf"></div>
<div class="b" style="left:1506.00px;top:1656.60px;width:2.00px;height:91.80px;background:#bfbfbf"></div>
<div class="t" style="left:-130.00px;width:1200px;top:1778.89px;font-size:26px;line-height:26px;color:#000;font-weight:400;text-align:center;">14</div>
<svg class="b" style="left:510px;top:1767.10px" width="70" height="52" viewBox="0 0 70 52"><defs><clipPath id="c510_17671"><rect x="0" y="0" width="70" height="52" rx="9" ry="9"/></clipPath></defs><g clip-path="url(#c510_17671)"><rect width="70" height="17.4" fill="#ae1c28"/><rect y="17.4" width="70" height="17.4" fill="#fff"/><rect y="34.8" width="70" height="17.2" fill="#21468b"/></g><rect x="0.5" y="0.5" width="69" height="51" rx="8.5" ry="8.5" fill="none" stroke="rgba(0,0,0,0.1)" stroke-width="1"/></svg>
<div class="t" style="right:2031.00px;top:1764.39px;font-size:26px;line-height:26px;color:#000;font-weight:700;text-align:right;">Om de hoek</div>
<div class="t" style="right:2031.00px;top:1801.79px;font-size:20.8px;line-height:20.8px;color:#5f5f5f;font-weight:400;text-align:right;">Radboud University</div>
<div class="t" style="left:787.50px;width:1200px;top:1779.39px;font-size:26px;line-height:26px;color:#000;font-weight:700;text-align:center;">7</div>
<div class="t" style="right:1877.00px;top:1779.39px;font-size:26px;line-height:26px;color:#000;font-weight:400;text-align:right;">854</div>
<div class="b" style="left:1638.33px;top:1752.40px;width:125.13px;height:80.00px;background:#60e760"></div>
<div class="t" style="left:1100.89px;width:1200px;top:1760.16px;font-size:31px;line-height:31px;color:#000;font-weight:400;text-align:center;">112</div>
<div class="t" style="left:1100.89px;width:1200px;top:1804.62px;font-size:21px;line-height:21px;color:#000;font-weight:400;text-align:center;">2 tries</div>
<div class="b" style="left:1767.05px;top:1752.40px;width:125.13px;height:80.00px;background:#60e760"></div>
<div class="t" style="left:1229.62px;width:1200px;top:1760.16px;font-size:31px;line-height:31px;color:#000;font-weight:400;text-align:center;">156</div>
<div class="t" style="left:1229.62px;width:1200px;top:1804.62px;font-size:21px;line-height:21px;color:#000;font-weight:400;text-align:center;">1 try</div>
<div class="b" style="left:2024.51px;top:1752.40px;width:125.13px;height:80.00px;background:#60e760"></div>
<div class="t" style="left:1487.07px;width:1200px;top:1760.16px;font-size:31px;line-height:31px;color:#000;font-weight:400;text-align:center;">179</div>
<div class="t" style="left:1487.07px;width:1200px;top:1804.62px;font-size:21px;line-height:21px;color:#000;font-weight:400;text-align:center;">2 tries</div>
<div class="b" style="left:2281.96px;top:1752.40px;width:125.13px;height:80.00px;background:#60e760"></div>
<div class="t" style="left:1744.53px;width:1200px;top:1760.16px;font-size:31px;line-height:31px;color:#000;font-weight:400;text-align:center;">120</div>
<div class="t" style="left:1744.53px;width:1200px;top:1804.62px;font-size:21px;line-height:21px;color:#000;font-weight:400;text-align:center;">2 tries</div>
<div class="b" style="left:2410.69px;top:1752.40px;width:125.13px;height:80.00px;background:#60e760"></div>
<div class="t" style="left:1873.25px;width:1200px;top:1760.16px;font-size:31px;line-height:31px;color:#000;font-weight:400;text-align:center;">71</div>
<div class="t" style="left:1873.25px;width:1200px;top:1804.62px;font-size:21px;line-height:21px;color:#000;font-weight:400;text-align:center;">3 tries</div>
<div class="b" style="left:2539.42px;top:1752.40px;width:125.13px;height:80.00px;background:#60e760"></div>
<div class="t" style="left:2001.98px;width:1200px;top:1760.16px;font-size:31px;line-height:31px;color:#000;font-weight:400;text-align:center;">60</div>
<div class="t" style="left:2001.98px;width:1200px;top:1804.62px;font-size:21px;line-height:21px;color:#000;font-weight:400;text-align:center;">2 tries</div>
<div class="b" style="left:2668.14px;top:1752.40px;width:125.13px;height:80.00px;background:#6666ff"></div>
<div class="t" style="left:2130.71px;width:1200px;top:1804.62px;font-size:21px;line-height:21px;color:#000;font-weight:400;text-align:center;">1 + 1 tries</div>
<div class="b" style="left:2796.87px;top:1752.40px;width:125.13px;height:80.00px;background:#60e760"></div>
<div class="t" style="left:2259.43px;width:1200px;top:1760.16px;font-size:31px;line-height:31px;color:#000;font-weight:400;text-align:center;">36</div>
<div class="t" style="left:2259.43px;width:1200px;top:1804.62px;font-size:21px;line-height:21px;color:#000;font-weight:400;text-align:center;">1 try</div>
<div class="b" style="left:439.00px;top:1837.40px;width:2485.00px;height:2.00px;background:#000"></div>
<div class="b" style="left:501.00px;top:1747.40px;width:2.00px;height:91.80px;background:#bfbfbf"></div>
<div class="b" style="left:1346.00px;top:1747.40px;width:2.00px;height:91.80px;background:#bfbfbf"></div>
<div class="b" style="left:1506.00px;top:1747.40px;width:2.00px;height:91.80px;background:#bfbfbf"></div>
<div class="t" style="left:-130.00px;width:1200px;top:1869.69px;font-size:26px;line-height:26px;color:#000;font-weight:400;text-align:center;">15</div>
<svg class="b" style="left:510px;top:1857.90px" width="70" height="52" viewBox="0 0 70 52"><defs><clipPath id="c510_18579"><rect x="0" y="0" width="70" height="52" rx="9" ry="9"/></clipPath></defs><g clip-path="url(#c510_18579)"><rect width="70" height="17.4" fill="#ae1c28"/><rect y="17.4" width="70" height="17.4" fill="#fff"/><rect y="34.8" width="70" height="17.2" fill="#21468b"/></g><rect x="0.5" y="0.5" width="69" height="51" rx="8.5" ry="8.5" fill="none" stroke="rgba(0,0,0,0.1)" stroke-width="1"/></svg>
<div class="t" style="right:2031.00px;top:1855.19px;font-size:26px;line-height:26px;color:#000;font-weight:700;text-align:right;">PromeTheUs</div>
<div class="t" style="right:2031.00px;top:1892.59px;font-size:20.8px;line-height:20.8px;color:#5f5f5f;font-weight:400;text-align:right;">Delft University of Technology</div>
<div class="t" style="left:787.50px;width:1200px;top:1870.19px;font-size:26px;line-height:26px;color:#000;font-weight:700;text-align:center;">7</div>
<div class="t" style="right:1877.00px;top:1870.19px;font-size:26px;line-height:26px;color:#000;font-weight:400;text-align:right;">854</div>
<div class="b" style="left:1638.33px;top:1843.20px;width:125.13px;height:80.00px;background:#60e760"></div>
<div class="t" style="left:1100.89px;width:1200px;top:1850.96px;font-size:31px;line-height:31px;color:#000;font-weight:400;text-align:center;">174</div>
<div class="t" style="left:1100.89px;width:1200px;top:1895.42px;font-size:21px;line-height:21px;color:#000;font-weight:400;text-align:center;">2 tries</div>
<div class="b" style="left:1767.05px;top:1843.20px;width:125.13px;height:80.00px;background:#60e760"></div>
<div class="t" style="left:1229.62px;width:1200px;top:1850.96px;font-size:31px;line-height:31px;color:#000;font-weight:400;text-align:center;">201</div>
<div class="t" style="left:1229.62px;width:1200px;top:1895.42px;font-size:21px;line-height:21px;color:#000;font-weight:400;text-align:center;">1 try</div>
<div class="b" style="left:2024.51px;top:1843.20px;width:125.13px;height:80.00px;background:#6666ff"></div>
<div class="t" style="left:1487.07px;width:1200px;top:1895.42px;font-size:21px;line-height:21px;color:#000;font-weight:400;text-align:center;">0 + 1 tries</div>
<div class="b" style="left:2281.96px;top:1843.20px;width:125.13px;height:80.00px;background:#60e760"></div>
<div class="t" style="left:1744.53px;width:1200px;top:1850.96px;font-size:31px;line-height:31px;color:#000;font-weight:400;text-align:center;">227</div>
<div class="t" style="left:1744.53px;width:1200px;top:1895.42px;font-size:21px;line-height:21px;color:#000;font-weight:400;text-align:center;">1 try</div>
<div class="b" style="left:2410.69px;top:1843.20px;width:125.13px;height:80.00px;background:#60e760"></div>
<div class="t" style="left:1873.25px;width:1200px;top:1850.96px;font-size:31px;line-height:31px;color:#000;font-weight:400;text-align:center;">39</div>
<div class="t" style="left:1873.25px;width:1200px;top:1895.42px;font-size:21px;line-height:21px;color:#000;font-weight:400;text-align:center;">1 try</div>
<div class="b" style="left:2539.42px;top:1843.20px;width:125.13px;height:80.00px;background:#60e760"></div>
<div class="t" style="left:2001.98px;width:1200px;top:1850.96px;font-size:31px;line-height:31px;color:#000;font-weight:400;text-align:center;">15</div>
<div class="t" style="left:2001.98px;width:1200px;top:1895.42px;font-size:21px;line-height:21px;color:#000;font-weight:400;text-align:center;">1 try</div>
<div class="b" style="left:2668.14px;top:1843.20px;width:125.13px;height:80.00px;background:#60e760"></div>
<div class="t" style="left:2130.71px;width:1200px;top:1850.96px;font-size:31px;line-height:31px;color:#000;font-weight:400;text-align:center;">120</div>
<div class="t" style="left:2130.71px;width:1200px;top:1895.42px;font-size:21px;line-height:21px;color:#000;font-weight:400;text-align:center;">1 try</div>
<div class="b" style="left:2796.87px;top:1843.20px;width:125.13px;height:80.00px;background:#60e760"></div>
<div class="t" style="left:2259.43px;width:1200px;top:1850.96px;font-size:31px;line-height:31px;color:#000;font-weight:400;text-align:center;">58</div>
<div class="t" style="left:2259.43px;width:1200px;top:1895.42px;font-size:21px;line-height:21px;color:#000;font-weight:400;text-align:center;">1 try</div>
<div class="b" style="left:439.00px;top:1928.20px;width:2485.00px;height:2.00px;background:#000"></div>
<div class="b" style="left:501.00px;top:1838.20px;width:2.00px;height:91.80px;background:#bfbfbf"></div>
<div class="b" style="left:1346.00px;top:1838.20px;width:2.00px;height:91.80px;background:#bfbfbf"></div>
<div class="b" style="left:1506.00px;top:1838.20px;width:2.00px;height:91.80px;background:#bfbfbf"></div>
<div class="t" style="left:-130.00px;width:1200px;top:1960.49px;font-size:26px;line-height:26px;color:#000;font-weight:400;text-align:center;">16</div>
<svg class="b" style="left:510px;top:1948.70px" width="70" height="52" viewBox="0 0 70 52"><defs><clipPath id="c510_19487"><rect x="0" y="0" width="70" height="52" rx="9" ry="9"/></clipPath></defs><g clip-path="url(#c510_19487)"><rect width="70" height="52" fill="#012169"/><path d="M0 0 L70 52 M70 0 L0 52" stroke="#fff" stroke-width="11"/><path d="M-2 -1.5 L35 26 M72 53.5 L35 26" stroke="#c8102e" stroke-width="3.6" transform="translate(-1.8,2.4)"/><path d="M72 -1.5 L35 26 M-2 53.5 L35 26" stroke="#c8102e" stroke-width="3.6" transform="translate(1.8,2.4)"/><rect x="26" y="0" width="18" height="52" fill="#fff"/><rect x="0" y="17.4" width="70" height="17.4" fill="#fff"/><rect x="30" y="0" width="10" height="52" fill="#c8102e"/><rect x="0" y="21.2" width="70" height="10.2" fill="#c8102e"/></g><rect x="0.5" y="0.5" width="69" height="51" rx="8.5" ry="8.5" fill="none" stroke="rgba(0,0,0,0.1)" stroke-width="1"/></svg>
<div class="t" style="right:2031.00px;top:1945.99px;font-size:26px;line-height:26px;color:#000;font-weight:700;text-align:right;">Oxford Ji-geiko</div>
<div class="t" style="right:2031.00px;top:1983.39px;font-size:20.8px;line-height:20.8px;color:#5f5f5f;font-weight:400;text-align:right;">University of Oxford</div>
<div class="t" style="left:787.50px;width:1200px;top:1960.99px;font-size:26px;line-height:26px;color:#000;font-weight:700;text-align:center;">7</div>
<div class="t" style="right:1877.00px;top:1960.99px;font-size:26px;line-height:26px;color:#000;font-weight:400;text-align:right;">922</div>
<div class="b" style="left:1509.60px;top:1934.00px;width:125.13px;height:80.00px;background:#6666ff"></div>
<div class="t" style="left:972.16px;width:1200px;top:1986.22px;font-size:21px;line-height:21px;color:#000;font-weight:400;text-align:center;">0 + 2 tries</div>
<div class="b" style="left:1638.33px;top:1934.00px;width:125.13px;height:80.00px;background:#60e760"></div>
<div class="t" style="left:1100.89px;width:1200px;top:1941.76px;font-size:31px;line-height:31px;color:#000;font-weight:400;text-align:center;">74</div>
<div class="t" style="left:1100.89px;width:1200px;top:1986.22px;font-size:21px;line-height:21px;color:#000;font-weight:400;text-align:center;">2 tries</div>
<div class="b" style="left:1767.05px;top:1934.00px;width:125.13px;height:80.00px;background:#60e760"></div>
<div class="t" style="left:1229.62px;width:1200px;top:1941.76px;font-size:31px;line-height:31px;color:#000;font-weight:400;text-align:center;">135</div>
<div class="t" style="left:1229.62px;width:1200px;top:1986.22px;font-size:21px;line-height:21px;color:#000;font-weight:400;text-align:center;">1 try</div>
<div class="b" style="left:1895.78px;top:1934.00px;width:125.13px;height:80.00px;background:#6666ff"></div>
<div class="t" style="left:1358.34px;width:1200px;top:1986.22px;font-size:21px;line-height:21px;color:#000;font-weight:400;text-align:center;">0 + 1 tries</div>
<div class="b" style="left:2024.51px;top:1934.00px;width:125.13px;height:80.00px;background:#6666ff"></div>
<div class="t" style="left:1487.07px;width:1200px;top:1986.22px;font-size:21px;line-height:21px;color:#000;font-weight:400;text-align:center;">0 + 1 tries</div>
<div class="b" style="left:2153.24px;top:1934.00px;width:125.13px;height:80.00px;background:#6666ff"></div>
<div class="t" style="left:1615.80px;width:1200px;top:1986.22px;font-size:21px;line-height:21px;color:#000;font-weight:400;text-align:center;">0 + 1 tries</div>
<div class="b" style="left:2281.96px;top:1934.00px;width:125.13px;height:80.00px;background:#60e760"></div>
<div class="t" style="left:1744.53px;width:1200px;top:1941.76px;font-size:31px;line-height:31px;color:#000;font-weight:400;text-align:center;">210</div>
<div class="t" style="left:1744.53px;width:1200px;top:1986.22px;font-size:21px;line-height:21px;color:#000;font-weight:400;text-align:center;">3 tries</div>
<div class="b" style="left:2410.69px;top:1934.00px;width:125.13px;height:80.00px;background:#60e760"></div>
<div class="t" style="left:1873.25px;width:1200px;top:1941.76px;font-size:31px;line-height:31px;color:#000;font-weight:400;text-align:center;">26</div>
<div class="t" style="left:1873.25px;width:1200px;top:1986.22px;font-size:21px;line-height:21px;color:#000;font-weight:400;text-align:center;">1 try</div>
<div class="b" style="left:2539.42px;top:1934.00px;width:125.13px;height:80.00px;background:#60e760"></div>
<div class="t" style="left:2001.98px;width:1200px;top:1941.76px;font-size:31px;line-height:31px;color:#000;font-weight:400;text-align:center;">16</div>
<div class="t" style="left:2001.98px;width:1200px;top:1986.22px;font-size:21px;line-height:21px;color:#000;font-weight:400;text-align:center;">2 tries</div>
<div class="b" style="left:2668.14px;top:1934.00px;width:125.13px;height:80.00px;background:#60e760"></div>
<div class="t" style="left:2130.71px;width:1200px;top:1941.76px;font-size:31px;line-height:31px;color:#000;font-weight:400;text-align:center;">180</div>
<div class="t" style="left:2130.71px;width:1200px;top:1986.22px;font-size:21px;line-height:21px;color:#000;font-weight:400;text-align:center;">8 tries</div>
<div class="b" style="left:2796.87px;top:1934.00px;width:125.13px;height:80.00px;background:#60e760"></div>
<div class="t" style="left:2259.43px;width:1200px;top:1941.76px;font-size:31px;line-height:31px;color:#000;font-weight:400;text-align:center;">41</div>
<div class="t" style="left:2259.43px;width:1200px;top:1986.22px;font-size:21px;line-height:21px;color:#000;font-weight:400;text-align:center;">2 tries</div>
<div class="b" style="left:439.00px;top:2019.00px;width:2485.00px;height:2.00px;background:#000"></div>
<div class="b" style="left:501.00px;top:1929.00px;width:2.00px;height:91.80px;background:#bfbfbf"></div>
<div class="b" style="left:1346.00px;top:1929.00px;width:2.00px;height:91.80px;background:#bfbfbf"></div>
<div class="b" style="left:1506.00px;top:1929.00px;width:2.00px;height:91.80px;background:#bfbfbf"></div>
<div class="t" style="left:-130.00px;width:1200px;top:2051.29px;font-size:26px;line-height:26px;color:#000;font-weight:400;text-align:center;">17</div>
<svg class="b" style="left:510px;top:2039.50px" width="70" height="52" viewBox="0 0 70 52"><defs><clipPath id="c510_20395"><rect x="0" y="0" width="70" height="52" rx="9" ry="9"/></clipPath></defs><g clip-path="url(#c510_20395)"><rect width="70" height="52" fill="#fff"/><rect x="19" y="0" width="14.4" height="52" fill="#002f6c"/><rect x="0" y="19" width="70" height="14.4" fill="#002f6c"/></g></svg>
<div class="t" style="right:2031.00px;top:2036.79px;font-size:26px;line-height:26px;color:#000;font-weight:700;text-align:right;">Ukkonen Fan Club</div>
<div class="t" style="right:2031.00px;top:2074.19px;font-size:20.8px;line-height:20.8px;color:#5f5f5f;font-weight:400;text-align:right;">University of Helsinki</div>
<div class="t" style="left:787.50px;width:1200px;top:2051.79px;font-size:26px;line-height:26px;color:#000;font-weight:700;text-align:center;">7</div>
<div class="t" style="right:1877.00px;top:2051.79px;font-size:26px;line-height:26px;color:#000;font-weight:400;text-align:right;">980</div>
<div class="b" style="left:1638.33px;top:2024.80px;width:125.13px;height:80.00px;background:#60e760"></div>
<div class="t" style="left:1100.89px;width:1200px;top:2032.56px;font-size:31px;line-height:31px;color:#000;font-weight:400;text-align:center;">53</div>
<div class="t" style="left:1100.89px;width:1200px;top:2077.02px;font-size:21px;line-height:21px;color:#000;font-weight:400;text-align:center;">2 tries</div>
<div class="b" style="left:1767.05px;top:2024.80px;width:125.13px;height:80.00px;background:#60e760"></div>
<div class="t" style="left:1229.62px;width:1200px;top:2032.56px;font-size:31px;line-height:31px;color:#000;font-weight:400;text-align:center;">218</div>
<div class="t" style="left:1229.62px;width:1200px;top:2077.02px;font-size:21px;line-height:21px;color:#000;font-weight:400;text-align:center;">1 try</div>
<div class="b" style="left:2024.51px;top:2024.80px;width:125.13px;height:80.00px;background:#6666ff"></div>
<div class="t" style="left:1487.07px;width:1200px;top:2077.02px;font-size:21px;line-height:21px;color:#000;font-weight:400;text-align:center;">0 + 1 tries</div>
<div class="b" style="left:2281.96px;top:2024.80px;width:125.13px;height:80.00px;background:#60e760"></div>
<div class="t" style="left:1744.53px;width:1200px;top:2032.56px;font-size:31px;line-height:31px;color:#000;font-weight:400;text-align:center;">153</div>
<div class="t" style="left:1744.53px;width:1200px;top:2077.02px;font-size:21px;line-height:21px;color:#000;font-weight:400;text-align:center;">1 try</div>
<div class="b" style="left:2410.69px;top:2024.80px;width:125.13px;height:80.00px;background:#60e760"></div>
<div class="t" style="left:1873.25px;width:1200px;top:2032.56px;font-size:31px;line-height:31px;color:#000;font-weight:400;text-align:center;">22</div>
<div class="t" style="left:1873.25px;width:1200px;top:2077.02px;font-size:21px;line-height:21px;color:#000;font-weight:400;text-align:center;">1 try</div>
<div class="b" style="left:2539.42px;top:2024.80px;width:125.13px;height:80.00px;background:#60e760"></div>
<div class="t" style="left:2001.98px;width:1200px;top:2032.56px;font-size:31px;line-height:31px;color:#000;font-weight:400;text-align:center;">49</div>
<div class="t" style="left:2001.98px;width:1200px;top:2077.02px;font-size:21px;line-height:21px;color:#000;font-weight:400;text-align:center;">1 try</div>
<div class="b" style="left:2668.14px;top:2024.80px;width:125.13px;height:80.00px;background:#60e760"></div>
<div class="t" style="left:2130.71px;width:1200px;top:2032.56px;font-size:31px;line-height:31px;color:#000;font-weight:400;text-align:center;">108</div>
<div class="t" style="left:2130.71px;width:1200px;top:2077.02px;font-size:21px;line-height:21px;color:#000;font-weight:400;text-align:center;">1 try</div>
<div class="b" style="left:2796.87px;top:2024.80px;width:125.13px;height:80.00px;background:#60e760"></div>
<div class="t" style="left:2259.43px;width:1200px;top:2032.56px;font-size:31px;line-height:31px;color:#000;font-weight:400;text-align:center;">59</div>
<div class="t" style="left:2259.43px;width:1200px;top:2077.02px;font-size:21px;line-height:21px;color:#000;font-weight:400;text-align:center;">1 try</div>
<div class="b" style="left:439.00px;top:2109.80px;width:2485.00px;height:2.00px;background:#000"></div>
<div class="b" style="left:501.00px;top:2019.80px;width:2.00px;height:91.80px;background:#bfbfbf"></div>
<div class="b" style="left:1346.00px;top:2019.80px;width:2.00px;height:91.80px;background:#bfbfbf"></div>
<div class="b" style="left:1506.00px;top:2019.80px;width:2.00px;height:91.80px;background:#bfbfbf"></div>
</body></html>
